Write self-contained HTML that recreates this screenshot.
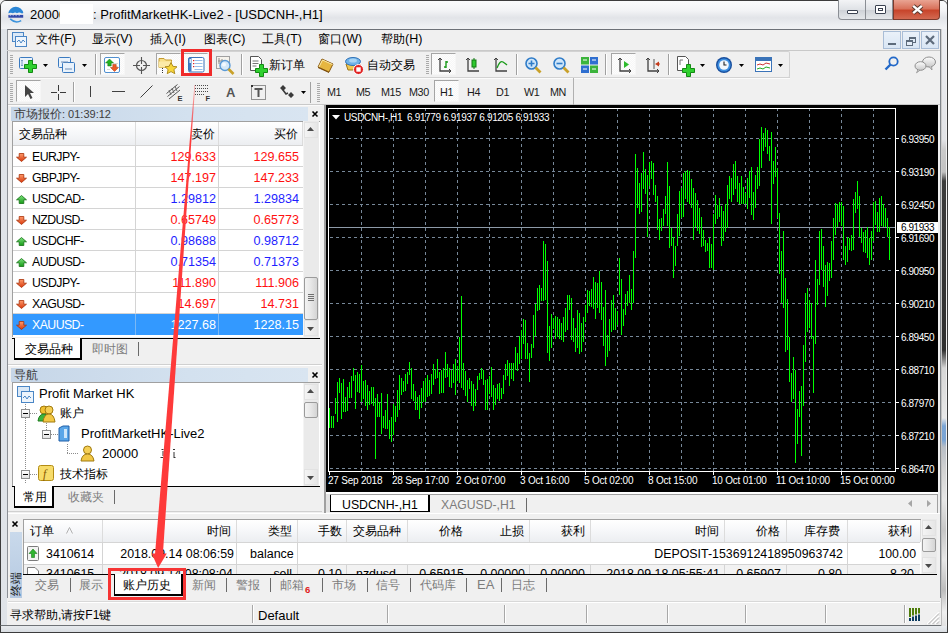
<!DOCTYPE html>
<html><head><meta charset="utf-8">
<style>
*{margin:0;padding:0;box-sizing:border-box}
html,body{width:948px;height:633px;overflow:hidden}
body{position:relative;background:#f0f0f0;font-family:"Liberation Sans",sans-serif;font-size:12px;color:#000}
.a{position:absolute}
.t{position:absolute;white-space:pre;line-height:1}
svg{overflow:visible}
</style></head><body>

<div class="a" style="left:0px;top:0px;width:948px;height:633px;background:linear-gradient(90deg,#dfe3e8,#eef0f3 50%,#dfe3e8);border:1px solid #3c3c3c;border-radius:6px 6px 0 0"></div>
<div class="a" style="left:1px;top:1px;width:946px;height:28px;background:linear-gradient(#fafbfc,#f2f3f5 35%,#e2e4e8 60%,#eceef1 85%,#f1f2f4);border-radius:5px 5px 0 0"></div>
<div class="a" style="left:838px;top:0px;width:28px;height:20px;background:linear-gradient(#f3f4f6,#dfe2e6 50%,#cdd1d6 51%,#e4e7ea);border:1px solid #8a8e94;border-top:none;border-radius:0 0 0 4px"></div>
<div class="a" style="left:866px;top:0px;width:27px;height:20px;background:linear-gradient(#f3f4f6,#dfe2e6 50%,#cdd1d6 51%,#e4e7ea);border:1px solid #8a8e94;border-top:none;border-left:none"></div>
<div class="a" style="left:893px;top:0px;width:47px;height:20px;background:linear-gradient(#e9a493,#d9735c 45%,#c8452b 55%,#d36a52);border:1px solid #7c3a2c;border-top:none;border-radius:0 0 4px 0"></div>
<div class="a" style="left:847px;top:10px;width:11px;height:4px;border:1.5px solid #3a4250;background:#fff;border-radius:1px"></div>
<div class="a" style="left:875px;top:5px;width:11px;height:9px;border:1.5px solid #3a4250;background:#fff;border-radius:1px"></div>
<div class="a" style="left:878px;top:8px;width:5px;height:3px;border:1px solid #3a4250"></div>
<svg class="a" style="left:911px;top:4px;" width="13" height="11" viewBox="0 0 13 11"><path d="M2.2 1.8 L10.8 9.2 M10.8 1.8 L2.2 9.2" stroke="#5a3a30" stroke-width="4.4"/><path d="M2.2 1.8 L10.8 9.2 M10.8 1.8 L2.2 9.2" stroke="#fff" stroke-width="2.4"/></svg>
<svg class="a" style="left:7px;top:6px;" width="18" height="18" viewBox="0 0 18 18"><path d="M1.3 7.3 A7.6 7.6 0 0 1 16.3 7 L15 7.4 Q12 5.6 10 7.2 Q8 5.8 6 7.3 Q4 6.2 1.3 7.3Z" fill="#2a86d6"/><rect x="1.4" y="8.9" width="14.8" height="2.8" fill="#3047a8"/><path d="M2.6 9.6h1.6M5.6 9.6h1.2M8.5 9.6h1.3M11.6 9.6h1.2" stroke="#c8d4f0" stroke-width="0.7"/><path d="M3.2 12.9 Q8.5 18 14.2 14.6" stroke="#3a92dc" stroke-width="1.5" fill="none"/></svg>
<div class="t" style="left:30px;top:8px;font-size:13px;color:#000;">20000</div>
<div class="a" style="left:60px;top:4px;width:33px;height:20px;background:#fff"></div>
<div class="t" style="left:93px;top:8px;font-size:13px;color:#000;">: ProfitMarketHK-Live2 - [USDCNH-,H1]</div>
<div class="a" style="left:7px;top:29px;width:934px;height:597px;background:#f0f0f0;border-top:1px solid #6d7178;border-left:1px solid #8c9096;border-right:1px solid #80858b"></div>
<svg class="a" style="left:12px;top:32px;" width="15" height="15" viewBox="0 0 15 15"><rect x="0.5" y="0.5" width="11" height="9" fill="#dbe9f7" stroke="#4a86c5"/><rect x="3.5" y="4.5" width="11" height="10" fill="#eef5fc" stroke="#4a86c5"/><path d="M5 10 l2 -2 l2 3 l2 -3 l2 2" stroke="#4a86c5" fill="none"/></svg>
<div class="t" style="left:36px;top:33px;font-size:12.5px;color:#000;"><span style="font-size:12px">文件</span>(F)</div>
<div class="t" style="left:92px;top:33px;font-size:12.5px;color:#000;"><span style="font-size:12px">显示</span>(V)</div>
<div class="t" style="left:150px;top:33px;font-size:12.5px;color:#000;"><span style="font-size:12px">插入</span>(I)</div>
<div class="t" style="left:204px;top:33px;font-size:12.5px;color:#000;"><span style="font-size:12px">图表</span>(C)</div>
<div class="t" style="left:262px;top:33px;font-size:12.5px;color:#000;"><span style="font-size:12px">工具</span>(T)</div>
<div class="t" style="left:318px;top:33px;font-size:12.5px;color:#000;"><span style="font-size:12px">窗口</span>(W)</div>
<div class="t" style="left:381px;top:33px;font-size:12.5px;color:#000;"><span style="font-size:12px">帮助</span>(H)</div>
<div class="a" style="left:883px;top:31px;width:18px;height:18px;background:linear-gradient(#eaf1f9,#d9e6f4);border:1px solid #a9bdd6"></div>
<div class="a" style="left:902px;top:31px;width:18px;height:18px;background:linear-gradient(#eaf1f9,#d9e6f4);border:1px solid #a9bdd6"></div>
<div class="a" style="left:921px;top:31px;width:18px;height:18px;background:linear-gradient(#eaf1f9,#d9e6f4);border:1px solid #a9bdd6"></div>
<div class="a" style="left:888px;top:43px;width:8px;height:2px;background:#5d6b7b"></div>
<div class="a" style="left:909px;top:37px;width:7px;height:6px;border:1.5px solid #5d6b7b;border-top-width:2px"></div>
<div class="a" style="left:906px;top:40px;width:7px;height:6px;border:1.5px solid #5d6b7b;border-top-width:2px;background:#e4edf7"></div>
<svg class="a" style="left:925px;top:35px;" width="10" height="10" viewBox="0 0 10 10"><path d="M1 1 L9 9 M9 1 L1 9" stroke="#5d6b7b" stroke-width="2.2"/></svg>
<div class="a" style="left:7px;top:50px;width:934px;height:1px;background:#d5d5d5"></div>
<div class="a" style="left:8px;top:50px;width:932px;height:1px;background:#c9c9c9"></div>
<div class="a" style="left:8px;top:77px;width:782px;height:1px;background:#cfcfcf"></div>
<div class="a" style="left:8px;top:78px;width:782px;height:1px;background:#fbfbfb"></div>
<div class="a" style="left:8px;top:104px;width:932px;height:1px;background:#c9c9c9"></div>
<div class="a" style="left:8px;top:105px;width:932px;height:1px;background:#fafafa"></div>
<div class="a" style="left:9px;top:51px;width:781px;height:27px;border:1px solid #d2d2d2;border-radius:2px;border-left:none"></div>
<svg class="a" style="left:10px;top:55px;" width="3" height="19" viewBox="0 0 3 19"><rect x="0" y="0" width="3" height="1" fill="#a9a9a9"/><rect x="0" y="2" width="3" height="1" fill="#a9a9a9"/><rect x="0" y="4" width="3" height="1" fill="#a9a9a9"/><rect x="0" y="6" width="3" height="1" fill="#a9a9a9"/><rect x="0" y="8" width="3" height="1" fill="#a9a9a9"/><rect x="0" y="10" width="3" height="1" fill="#a9a9a9"/><rect x="0" y="12" width="3" height="1" fill="#a9a9a9"/><rect x="0" y="14" width="3" height="1" fill="#a9a9a9"/><rect x="0" y="16" width="3" height="1" fill="#a9a9a9"/><rect x="0" y="18" width="3" height="1" fill="#a9a9a9"/></svg>
<svg class="a" style="left:19px;top:57px;" width="18" height="18" viewBox="0 0 18 18"><rect x="0.5" y="0.5" width="13" height="11" rx="1" fill="#e9f2fb" stroke="#3a7ac0"/><path d="M3 3 v6 M2 4 l1 -1 l1 1 M2 8 l1 1 l1 -1" stroke="#7a9cc4" fill="none"/><path d="M5.5 7.5 h4 v-4 h4 v4 h4 v4 h-4 v4 h-4 v-4 h-4z" fill="#2fd02f" stroke="#138a13"/></svg>
<svg class="a" style="left:43px;top:64px;" width="5" height="3" viewBox="0 0 5 3"><path d="M0 0 H5 L2.5 3Z" fill="#000"/></svg>
<svg class="a" style="left:58px;top:57px;" width="17" height="16" viewBox="0 0 17 16"><rect x="0.5" y="0.5" width="12" height="10" rx="1" fill="#e9f2fb" stroke="#3a7ac0"/><rect x="4.5" y="5.5" width="12" height="10" rx="1" fill="#e9f2fb" stroke="#3a7ac0"/><path d="M3 5 h7 M7 12 h7" stroke="#6f8fb8"/></svg>
<svg class="a" style="left:82px;top:64px;" width="5" height="3" viewBox="0 0 5 3"><path d="M0 0 H5 L2.5 3Z" fill="#000"/></svg>
<div class="a" style="left:95px;top:54px;width:1px;height:21px;background:#a0a0a0"></div>
<div class="a" style="left:96px;top:54px;width:1px;height:21px;background:#fff"></div>
<div class="a" style="left:100px;top:53px;width:25px;height:22px;background:repeating-conic-gradient(#f7f7f7 0 25%,#fdfdfd 0 50%) 0 0/2px 2px;border:1px solid;border-color:#a5a5a5 #f6f6f6 #f6f6f6 #a5a5a5"></div>
<svg class="a" style="left:104px;top:57px;" width="17" height="16" viewBox="0 0 17 16"><rect x="0.5" y="0.5" width="15" height="15" rx="1.5" fill="#fff" stroke="#4f8fd0"/><path d="M9 6.5h5M9 9.5h5M3 12.5h3" stroke="#d8d8d8"/><path d="M5.5 2 l4 4 h-2.3 v3 h-3.4 v-3 h-2.3z" fill="#22b422" stroke="#137013" stroke-width="0.5"/><path d="M10.5 14.5 l4 -4 h-2.3 v-3 h-3.4 v3 h-2.3z" fill="#ee5a24" stroke="#a83008" stroke-width="0.5"/></svg>
<svg class="a" style="left:133px;top:57px;" width="16" height="16" viewBox="0 0 16 16"><circle cx="8.5" cy="8.5" r="5" fill="none" stroke="#555" stroke-width="1.2"/><path d="M8.5 0 v7 M8.5 10 v7 M0 8.5 h7 M10 8.5 h7" stroke="#555" stroke-width="1.1"/></svg>
<div class="a" style="left:156px;top:53px;width:25px;height:22px;background:repeating-conic-gradient(#f7f7f7 0 25%,#fdfdfd 0 50%) 0 0/2px 2px;border:1px solid;border-color:#a5a5a5 #f6f6f6 #f6f6f6 #a5a5a5"></div>
<svg class="a" style="left:158px;top:56px;" width="20" height="19" viewBox="0 0 20 19"><path d="M1 2.5 h5 l1.5 1.5 h6 v7.5 h-12.5z" fill="#f8e08a" stroke="#c49a30"/><path d="M1 5.5 h12.5 v6 h-12.5z" fill="#fbeaa8"/><path d="M13 6.5 l1.9 3.8 l4.1 .5 l-3.1 2.8 l.9 4.1 l-3.8 -2.1 l-3.8 2.1 l.9 -4.1 l-3.1 -2.8 l4.1 -.5z" fill="#f7d63a" stroke="#a88416" stroke-width="0.9"/><path d="M4.5 12 v6" stroke="#333" stroke-dasharray="1 1"/></svg>
<div class="a" style="left:183px;top:53px;width:25px;height:22px;background:repeating-conic-gradient(#f7f7f7 0 25%,#fdfdfd 0 50%) 0 0/2px 2px;border:1px solid;border-color:#a5a5a5 #f6f6f6 #f6f6f6 #a5a5a5"></div>
<svg class="a" style="left:188px;top:57px;" width="17" height="16" viewBox="0 0 17 16"><rect x="0.5" y="0.5" width="15.5" height="14.5" rx="1.5" fill="#fff" stroke="#3a73b8"/><rect x="1" y="1" width="2.5" height="13.5" fill="#3f7cc4"/><rect x="1.5" y="2" width="1.5" height="4" fill="#dfeaf6"/><path d="M6.5 3.5 h8 M6.5 6.5 h8 M6.5 9.5 h8 M6.5 12.5 h8" stroke="#8db8e6" stroke-width="0.9"/><rect x="5" y="3" width="1.2" height="1.2" fill="#e02222"/><rect x="5" y="6" width="1.2" height="1.2" fill="#e02222"/><rect x="5" y="9" width="1.2" height="1.2" fill="#e02222"/></svg>
<div class="a" style="left:181px;top:49px;width:31px;height:27px;border:3px solid #f02b2b"></div>
<svg class="a" style="left:216px;top:56px;" width="19" height="19" viewBox="0 0 19 19"><rect x="0.5" y="0.5" width="13" height="12" fill="#f6f3ec" stroke="#a0a0a0"/><path d="M3 2 v6 M6 3 v4 M2 5 h6" stroke="#8a8a8a"/><circle cx="9" cy="9.5" r="5" fill="#d6e9f8" stroke="#5a9ad6" stroke-width="1.4"/><circle cx="8" cy="8.5" r="2" fill="#f4faff"/><path d="M12.5 13 l5 5" stroke="#c9a12a" stroke-width="2.6"/></svg>
<div class="a" style="left:241px;top:54px;width:1px;height:21px;background:#a0a0a0"></div>
<div class="a" style="left:242px;top:54px;width:1px;height:21px;background:#fff"></div>
<svg class="a" style="left:250px;top:56px;" width="18" height="21" viewBox="0 0 18 21"><path d="M0.5 0.5 h8 l3 3 v11 h-11z" fill="#fff" stroke="#555"/><path d="M2.5 5 h6 M2.5 7.5 h6 M2.5 10 h4" stroke="#777"/><path d="M5.5 12.5 h4 v-4 h4 v4 h4 v4 h-4 v4 h-4 v-4 h-4z" fill="#2fd02f" stroke="#138a13"/></svg>
<div class="t" style="left:269px;top:58px;font-size:13px;color:#000;"><span style="font-size:12px">新订单</span></div>
<svg class="a" style="left:317px;top:57px;" width="17" height="16" viewBox="0 0 17 16"><path d="M1 10 l4 -8 l11 5 l-4 8z" fill="#e6b640" stroke="#8a5a10"/><path d="M2 10 l3.5 -7 l10 4.5" stroke="#fbe9a8" fill="none"/><path d="M1 10 l11 5 v1 l-11 -5z" fill="#7a4a08"/></svg>
<svg class="a" style="left:345px;top:56px;" width="19" height="19" viewBox="0 0 19 19"><path d="M1 8 L15 8 L13 14 L3 14Z" fill="#f0c850" stroke="#a07818"/><ellipse cx="8" cy="5.5" rx="7.5" ry="4" fill="#6fb2e8" stroke="#2f72b8"/><ellipse cx="8" cy="4.5" rx="4" ry="2" fill="#a8d4f4"/><circle cx="13.5" cy="13.5" r="5" fill="#e02222" stroke="#fff" stroke-width="1"/><rect x="11.3" y="11.3" width="4.4" height="4.4" fill="#fff"/></svg>
<div class="t" style="left:367px;top:58px;font-size:13px;color:#000;"><span style="font-size:12px">自动交易</span></div>
<svg class="a" style="left:426px;top:55px;" width="3" height="19" viewBox="0 0 3 19"><rect x="0" y="0" width="3" height="1" fill="#a9a9a9"/><rect x="0" y="2" width="3" height="1" fill="#a9a9a9"/><rect x="0" y="4" width="3" height="1" fill="#a9a9a9"/><rect x="0" y="6" width="3" height="1" fill="#a9a9a9"/><rect x="0" y="8" width="3" height="1" fill="#a9a9a9"/><rect x="0" y="10" width="3" height="1" fill="#a9a9a9"/><rect x="0" y="12" width="3" height="1" fill="#a9a9a9"/><rect x="0" y="14" width="3" height="1" fill="#a9a9a9"/><rect x="0" y="16" width="3" height="1" fill="#a9a9a9"/><rect x="0" y="18" width="3" height="1" fill="#a9a9a9"/></svg>
<div class="a" style="left:431px;top:53px;width:25px;height:22px;background:repeating-conic-gradient(#f7f7f7 0 25%,#fdfdfd 0 50%) 0 0/2px 2px;border:1px solid;border-color:#a5a5a5 #f6f6f6 #f6f6f6 #a5a5a5"></div>
<svg class="a" style="left:437px;top:57px;" width="15" height="16" viewBox="0 0 15 16"><path d="M3 1 v13 h11" stroke="#404040" fill="none" stroke-width="1.3"/><path d="M1 3 l2 -2 l2 2 M12 12 l2 2 l-2 2" stroke="#404040" fill="none"/><path d="M9 4 v7 M7 10 h2 M9 5 h2" stroke="#1a9b1a" stroke-width="1.4" fill="none"/></svg>
<svg class="a" style="left:465px;top:57px;" width="15" height="16" viewBox="0 0 15 16"><path d="M3 1 v13 h11" stroke="#404040" fill="none" stroke-width="1.3"/><path d="M1 3 l2 -2 l2 2" stroke="#404040" fill="none"/><rect x="7" y="3" width="4" height="7" fill="#2dc82d" stroke="#137a13"/><path d="M9 1 v2 M9 10 v2" stroke="#137a13"/></svg>
<svg class="a" style="left:493px;top:57px;" width="15" height="16" viewBox="0 0 15 16"><path d="M3 1 v13 h11" stroke="#404040" fill="none" stroke-width="1.3"/><path d="M1 3 l2 -2 l2 2" stroke="#404040" fill="none"/><path d="M4 11 q3 -8 6 -6 t4 3" stroke="#1a9b1a" fill="none" stroke-width="1.3"/></svg>
<div class="a" style="left:516px;top:54px;width:1px;height:21px;background:#a0a0a0"></div>
<div class="a" style="left:517px;top:54px;width:1px;height:21px;background:#fff"></div>
<svg class="a" style="left:525px;top:57px;" width="17" height="17" viewBox="0 0 17 17"><circle cx="6.5" cy="6.5" r="5.5" fill="#cfe6fa" stroke="#2f7cc8" stroke-width="1.6"/><path d="M3.5 6.5 h6 M6.5 3.5 v6" stroke="#2f7cc8" stroke-width="1.6"/><path d="M10.5 10.5 l5 5" stroke="#c9a12a" stroke-width="2.8"/></svg>
<svg class="a" style="left:553px;top:57px;" width="17" height="17" viewBox="0 0 17 17"><circle cx="6.5" cy="6.5" r="5.5" fill="#cfe6fa" stroke="#2f7cc8" stroke-width="1.6"/><path d="M3.5 6.5 h6" stroke="#2f7cc8" stroke-width="1.6"/><path d="M10.5 10.5 l5 5" stroke="#c9a12a" stroke-width="2.8"/></svg>
<svg class="a" style="left:581px;top:57px;" width="17" height="16" viewBox="0 0 17 16"><rect x="0" y="0" width="8" height="7.5" fill="#3cb43c"/><rect x="9" y="0" width="8" height="7.5" fill="#2f6fd0"/><rect x="0" y="8.5" width="8" height="7.5" fill="#2f6fd0"/><rect x="9" y="8.5" width="8" height="7.5" fill="#3cb43c"/><path d="M2 3 h4 M11 3 h4 M2 12 h4 M11 12 h4" stroke="#fff"/></svg>
<div class="a" style="left:605px;top:54px;width:1px;height:21px;background:#a0a0a0"></div>
<div class="a" style="left:606px;top:54px;width:1px;height:21px;background:#fff"></div>
<div class="a" style="left:611px;top:53px;width:25px;height:22px;background:repeating-conic-gradient(#f7f7f7 0 25%,#fdfdfd 0 50%) 0 0/2px 2px;border:1px solid;border-color:#a5a5a5 #f6f6f6 #f6f6f6 #a5a5a5"></div>
<svg class="a" style="left:617px;top:57px;" width="15" height="16" viewBox="0 0 15 16"><path d="M3 1 v13 h11" stroke="#404040" fill="none" stroke-width="1.3"/><path d="M1 3 l2 -2 l2 2 M12 12 l2 2 l-2 2" stroke="#404040" fill="none"/><path d="M7 4 l5 3.5 l-5 3.5z" fill="#2dbb2d"/></svg>
<svg class="a" style="left:645px;top:57px;" width="15" height="16" viewBox="0 0 15 16"><path d="M3 1 v13 h11" stroke="#404040" fill="none" stroke-width="1.3"/><path d="M1 3 l2 -2 l2 2 M12 12 l2 2 l-2 2" stroke="#404040" fill="none"/><path d="M9 2 v10" stroke="#555"/><path d="M10 7 l4 -2.5 v5z" fill="#c43a1a"/><path d="M13 7 h2" stroke="#c43a1a"/></svg>
<div class="a" style="left:668px;top:54px;width:1px;height:21px;background:#a0a0a0"></div>
<div class="a" style="left:669px;top:54px;width:1px;height:21px;background:#fff"></div>
<svg class="a" style="left:677px;top:56px;" width="18" height="21" viewBox="0 0 18 21"><path d="M0.5 0.5 h8 l3 3 v11 h-11z" fill="#fff" stroke="#555"/><path d="M3 9 v-5 h3" stroke="#777" fill="none"/><path d="M5.5 12.5 h4 v-4 h4 v4 h4 v4 h-4 v4 h-4 v-4 h-4z" fill="#2fd02f" stroke="#138a13"/></svg>
<svg class="a" style="left:700px;top:64px;" width="5" height="3" viewBox="0 0 5 3"><path d="M0 0 H5 L2.5 3Z" fill="#000"/></svg>
<svg class="a" style="left:716px;top:57px;" width="17" height="17" viewBox="0 0 17 17"><circle cx="8" cy="8" r="8" fill="#184f9e"/><circle cx="8" cy="8" r="6.6" fill="#3c8ee0"/><circle cx="8" cy="8" r="4.8" fill="#f4f8fc"/><path d="M8 4.5 v3.5 h2.5" stroke="#222" fill="none" stroke-width="1.1"/></svg>
<svg class="a" style="left:739px;top:64px;" width="5" height="3" viewBox="0 0 5 3"><path d="M0 0 H5 L2.5 3Z" fill="#000"/></svg>
<svg class="a" style="left:755px;top:57px;" width="17" height="16" viewBox="0 0 17 16"><rect x="0.5" y="0.5" width="16" height="14" fill="#fff" stroke="#3a73b8"/><rect x="1" y="1" width="15" height="3" fill="#3a73b8"/><path d="M2 8 l3 -1 l3 1 l3 -2 l4 1" stroke="#cc3333" fill="none"/><path d="M2 12 l3 -1 l3 1 l3 -2 l4 1" stroke="#22aa22" fill="none"/></svg>
<svg class="a" style="left:778px;top:64px;" width="5" height="3" viewBox="0 0 5 3"><path d="M0 0 H5 L2.5 3Z" fill="#000"/></svg>
<svg class="a" style="left:884px;top:56px;" width="16" height="16" viewBox="0 0 16 16"><circle cx="9.5" cy="5.5" r="4.2" fill="none" stroke="#2268c8" stroke-width="1.8"/><path d="M6.5 8.5 l-5 5" stroke="#2268c8" stroke-width="2.4"/></svg>
<svg class="a" style="left:914px;top:56px;" width="24" height="17" viewBox="0 0 24 17"><defs><linearGradient id="bub" x1="0" y1="0" x2="0" y2="1"><stop offset="0" stop-color="#fdfdfd"/><stop offset="1" stop-color="#c9c9c9"/></linearGradient></defs><ellipse cx="15" cy="6" rx="6.5" ry="5" fill="url(#bub)" stroke="#8f8f8f"/><path d="M15 10.5 l3 3.5 l-0.5 -4" fill="#d0d0d0" stroke="#8f8f8f" stroke-width="0.8"/><ellipse cx="6.5" cy="10" rx="5.5" ry="4.3" fill="url(#bub)" stroke="#8f8f8f"/><path d="M4 13.8 l-1.5 3 l3.5 -2.6" fill="#d0d0d0" stroke="#8f8f8f" stroke-width="0.8"/></svg>
<div class="a" style="left:9px;top:78px;width:565px;height:27px;border-right:1px solid #b0b0b0"></div>
<svg class="a" style="left:10px;top:83px;" width="3" height="19" viewBox="0 0 3 19"><rect x="0" y="0" width="3" height="1" fill="#a9a9a9"/><rect x="0" y="2" width="3" height="1" fill="#a9a9a9"/><rect x="0" y="4" width="3" height="1" fill="#a9a9a9"/><rect x="0" y="6" width="3" height="1" fill="#a9a9a9"/><rect x="0" y="8" width="3" height="1" fill="#a9a9a9"/><rect x="0" y="10" width="3" height="1" fill="#a9a9a9"/><rect x="0" y="12" width="3" height="1" fill="#a9a9a9"/><rect x="0" y="14" width="3" height="1" fill="#a9a9a9"/><rect x="0" y="16" width="3" height="1" fill="#a9a9a9"/><rect x="0" y="18" width="3" height="1" fill="#a9a9a9"/></svg>
<div class="a" style="left:16px;top:80px;width:25px;height:22px;background:repeating-conic-gradient(#f7f7f7 0 25%,#fdfdfd 0 50%) 0 0/2px 2px;border:1px solid;border-color:#a5a5a5 #f6f6f6 #f6f6f6 #a5a5a5"></div>
<svg class="a" style="left:24px;top:85px;" width="10" height="15" viewBox="0 0 10 15"><path d="M1 0 v12 l3 -3 l2.5 5 l2 -1 l-2.5 -5 h4z" fill="#444"/></svg>
<svg class="a" style="left:50px;top:84px;" width="16" height="16" viewBox="0 0 16 16"><path d="M8.5 1 v6 M8.5 10 v6 M1 8.5 h6 M10 8.5 h6" stroke="#3a3a3a" stroke-width="1"/></svg>
<div class="a" style="left:73px;top:82px;width:1px;height:20px;background:#a0a0a0"></div>
<div class="a" style="left:74px;top:82px;width:1px;height:20px;background:#fff"></div>
<div class="a" style="left:90px;top:86px;width:1px;height:11px;background:#404040"></div>
<div class="a" style="left:112px;top:91px;width:13px;height:1px;background:#404040"></div>
<svg class="a" style="left:140px;top:85px;" width="13" height="13" viewBox="0 0 13 13"><path d="M0.5 12.5 L12.5 0.5" stroke="#404040"/></svg>
<svg class="a" style="left:166px;top:84px;" width="18" height="17" viewBox="0 0 18 17"><path d="M0.5 9.5 l11 -9 M1.5 12.5 l12 -10 M3 15 l11 -9" stroke="#555" stroke-width="1"/><path d="M3 6 l2 5 M6 4 l2 5 M9 2 l2 5" stroke="#666"/><text x="11.5" y="16.5" font-size="7.5" font-family="Liberation Sans" font-weight="bold" fill="#333">E</text></svg>
<svg class="a" style="left:195px;top:84px;" width="17" height="17" viewBox="0 0 17 17"><path d="M0 1.5 h14 M0 4.5 h14 M0 7.5 h14 M0 10.5 h9" stroke="#4a4a4a" stroke-dasharray="1 1"/><text x="10.5" y="16.5" font-size="7.5" font-family="Liberation Sans" font-weight="bold" fill="#333">F</text></svg>
<div class="t" style="left:226px;top:86px;font-size:13px;color:#555;font-weight:bold">A</div>
<svg class="a" style="left:251px;top:85px;" width="15" height="15" viewBox="0 0 15 15"><rect x="0.5" y="0.5" width="14" height="14" fill="none" stroke="#333" stroke-dasharray="1 1"/><rect x="0" y="0" width="2" height="2" fill="#333"/><path d="M3.5 4 h8 M7.5 4 v8" stroke="#555" stroke-width="2"/></svg>
<svg class="a" style="left:279px;top:84px;" width="16" height="16" viewBox="0 0 16 16"><path d="M1 4 l3 -3 l3 3 l-3 3z M9 11 l3 -3 l3 3 l-3 3z" fill="#3a3a3a"/><path d="M4 6 l3 4 l2 -1" stroke="#3a3a3a" stroke-width="1.6" fill="none"/></svg>
<svg class="a" style="left:301px;top:91px;" width="5" height="3" viewBox="0 0 5 3"><path d="M0 0 H5 L2.5 3Z" fill="#000"/></svg>
<div class="a" style="left:310px;top:82px;width:1px;height:21px;background:#a0a0a0"></div>
<svg class="a" style="left:317px;top:83px;" width="3" height="19" viewBox="0 0 3 19"><rect x="0" y="0" width="3" height="1" fill="#a9a9a9"/><rect x="0" y="2" width="3" height="1" fill="#a9a9a9"/><rect x="0" y="4" width="3" height="1" fill="#a9a9a9"/><rect x="0" y="6" width="3" height="1" fill="#a9a9a9"/><rect x="0" y="8" width="3" height="1" fill="#a9a9a9"/><rect x="0" y="10" width="3" height="1" fill="#a9a9a9"/><rect x="0" y="12" width="3" height="1" fill="#a9a9a9"/><rect x="0" y="14" width="3" height="1" fill="#a9a9a9"/><rect x="0" y="16" width="3" height="1" fill="#a9a9a9"/><rect x="0" y="18" width="3" height="1" fill="#a9a9a9"/></svg>
<div class="t" style="left:327px;top:87px;font-size:10.8px;color:#1a1a1a;letter-spacing:-0.4px">M1</div>
<div class="t" style="left:356px;top:87px;font-size:10.8px;color:#1a1a1a;letter-spacing:-0.4px">M5</div>
<div class="t" style="left:381px;top:87px;font-size:10.8px;color:#1a1a1a;letter-spacing:-0.4px">M15</div>
<div class="t" style="left:409px;top:87px;font-size:10.8px;color:#1a1a1a;letter-spacing:-0.4px">M30</div>
<div class="t" style="left:467px;top:87px;font-size:10.8px;color:#1a1a1a;letter-spacing:-0.4px">H4</div>
<div class="t" style="left:496px;top:87px;font-size:10.8px;color:#1a1a1a;letter-spacing:-0.4px">D1</div>
<div class="t" style="left:524px;top:87px;font-size:10.8px;color:#1a1a1a;letter-spacing:-0.4px">W1</div>
<div class="t" style="left:550px;top:87px;font-size:10.8px;color:#1a1a1a;letter-spacing:-0.4px">MN</div>
<div class="a" style="left:434px;top:80px;width:25px;height:22px;background:repeating-conic-gradient(#f7f7f7 0 25%,#fdfdfd 0 50%) 0 0/2px 2px;border:1px solid;border-color:#a5a5a5 #f6f6f6 #f6f6f6 #a5a5a5"></div>
<div class="t" style="left:440px;top:87px;font-size:10.8px;color:#1a1a1a;letter-spacing:-0.4px">H1</div>
<div class="a" style="left:322px;top:105px;width:2px;height:409px;background:#f0f0f0"></div>
<div class="a" style="left:324px;top:105px;width:1px;height:409px;background:#a0a0a0"></div>
<div class="a" style="left:325px;top:105px;width:1px;height:409px;background:#fff"></div>
<div class="a" style="left:11px;top:107px;width:297px;height:14px;background:linear-gradient(90deg,#c6d6e8,#d3e1ef 60%,#d9e5f1);"></div>
<div class="t" style="left:14px;top:108px;font-size:11px;color:#3c3c3c;"><span style="font-size:12px">市场报价</span>: 01:39:12</div>
<svg class="a" style="left:312px;top:111px;" width="6" height="6" viewBox="0 0 6 6"><path d="M0.5 0.5 L5.5 5.5 M5.5 0.5 L0.5 5.5" stroke="#000" stroke-width="1.6"/></svg>
<div class="a" style="left:12px;top:121px;width:308px;height:216px;background:#fff;border-top:1px solid #a0a0a0;border-left:1px solid #a0a0a0"></div>
<div class="a" style="left:13px;top:122px;width:290px;height:23px;background:linear-gradient(#ffffff,#f6f7f9 50%,#eceef1)"></div>
<div class="a" style="left:13px;top:145px;width:290px;height:1px;background:#d5d5d5"></div>
<div class="a" style="left:135px;top:122px;width:1px;height:23px;background:#dcdcdc"></div>
<div class="a" style="left:218px;top:122px;width:1px;height:23px;background:#dcdcdc"></div>
<div class="a" style="left:302px;top:122px;width:1px;height:23px;background:#dcdcdc"></div>
<div class="t" style="left:19px;top:127px;font-size:13px;color:#000;"><span style="font-size:12px">交易品种</span></div>
<div class="t" style="left:-185px;width:400px;text-align:right;top:127px;font-size:13px;color:#000;"><span style="font-size:12px">卖价</span></div>
<div class="t" style="left:-102px;width:400px;text-align:right;top:127px;font-size:13px;color:#000;"><span style="font-size:12px">买价</span></div>
<div class="a" style="left:13px;top:166px;width:290px;height:1px;background:#d4d4d4"></div>
<div class="a" style="left:135px;top:146px;width:1px;height:20px;background:#d4d4d4"></div>
<div class="a" style="left:218px;top:146px;width:1px;height:20px;background:#d4d4d4"></div>
<svg class="a" style="left:16px;top:153px;" width="11" height="9" viewBox="0 0 11 9"><defs><linearGradient id="gd" x1="0" y1="0" x2="0" y2="1"><stop offset="0" stop-color="#ff9a6a"/><stop offset="1" stop-color="#d8380c"/></linearGradient></defs><path d="M5.5 8.5 L10.5 4.2 H7.8 V0.5 H3.2 V4.2 H0.5Z" fill="url(#gd)" stroke="#a83008" stroke-width="0.8"/></svg>
<div class="t" style="left:32px;top:151px;font-size:12.3px;color:#000;letter-spacing:-0.55px">EURJPY-</div>
<div class="t" style="left:-184px;width:400px;text-align:right;top:151px;font-size:12.6px;color:#ff1010;">129.633</div>
<div class="t" style="left:-101px;width:400px;text-align:right;top:151px;font-size:12.6px;color:#ff1010;">129.655</div>
<div class="a" style="left:13px;top:187px;width:290px;height:1px;background:#d4d4d4"></div>
<div class="a" style="left:135px;top:167px;width:1px;height:20px;background:#d4d4d4"></div>
<div class="a" style="left:218px;top:167px;width:1px;height:20px;background:#d4d4d4"></div>
<svg class="a" style="left:16px;top:174px;" width="11" height="9" viewBox="0 0 11 9"><defs><linearGradient id="gd" x1="0" y1="0" x2="0" y2="1"><stop offset="0" stop-color="#ff9a6a"/><stop offset="1" stop-color="#d8380c"/></linearGradient></defs><path d="M5.5 8.5 L10.5 4.2 H7.8 V0.5 H3.2 V4.2 H0.5Z" fill="url(#gd)" stroke="#a83008" stroke-width="0.8"/></svg>
<div class="t" style="left:32px;top:172px;font-size:12.3px;color:#000;letter-spacing:-0.55px">GBPJPY-</div>
<div class="t" style="left:-184px;width:400px;text-align:right;top:172px;font-size:12.6px;color:#ff1010;">147.197</div>
<div class="t" style="left:-101px;width:400px;text-align:right;top:172px;font-size:12.6px;color:#ff1010;">147.233</div>
<div class="a" style="left:13px;top:208px;width:290px;height:1px;background:#d4d4d4"></div>
<div class="a" style="left:135px;top:188px;width:1px;height:20px;background:#d4d4d4"></div>
<div class="a" style="left:218px;top:188px;width:1px;height:20px;background:#d4d4d4"></div>
<svg class="a" style="left:16px;top:195px;" width="11" height="9" viewBox="0 0 11 9"><defs><linearGradient id="gu" x1="0" y1="0" x2="0" y2="1"><stop offset="0" stop-color="#7be07b"/><stop offset="1" stop-color="#169a16"/></linearGradient></defs><path d="M5.5 0.5 L10.5 4.8 H7.8 V8.5 H3.2 V4.8 H0.5Z" fill="url(#gu)" stroke="#137013" stroke-width="0.8"/></svg>
<div class="t" style="left:32px;top:193px;font-size:12.3px;color:#000;letter-spacing:-0.55px">USDCAD-</div>
<div class="t" style="left:-184px;width:400px;text-align:right;top:193px;font-size:12.6px;color:#1f1fff;">1.29812</div>
<div class="t" style="left:-101px;width:400px;text-align:right;top:193px;font-size:12.6px;color:#1f1fff;">1.29834</div>
<div class="a" style="left:13px;top:229px;width:290px;height:1px;background:#d4d4d4"></div>
<div class="a" style="left:135px;top:209px;width:1px;height:20px;background:#d4d4d4"></div>
<div class="a" style="left:218px;top:209px;width:1px;height:20px;background:#d4d4d4"></div>
<svg class="a" style="left:16px;top:216px;" width="11" height="9" viewBox="0 0 11 9"><defs><linearGradient id="gd" x1="0" y1="0" x2="0" y2="1"><stop offset="0" stop-color="#ff9a6a"/><stop offset="1" stop-color="#d8380c"/></linearGradient></defs><path d="M5.5 8.5 L10.5 4.2 H7.8 V0.5 H3.2 V4.2 H0.5Z" fill="url(#gd)" stroke="#a83008" stroke-width="0.8"/></svg>
<div class="t" style="left:32px;top:214px;font-size:12.3px;color:#000;letter-spacing:-0.55px">NZDUSD-</div>
<div class="t" style="left:-184px;width:400px;text-align:right;top:214px;font-size:12.6px;color:#ff1010;">0.65749</div>
<div class="t" style="left:-101px;width:400px;text-align:right;top:214px;font-size:12.6px;color:#ff1010;">0.65773</div>
<div class="a" style="left:13px;top:250px;width:290px;height:1px;background:#d4d4d4"></div>
<div class="a" style="left:135px;top:230px;width:1px;height:20px;background:#d4d4d4"></div>
<div class="a" style="left:218px;top:230px;width:1px;height:20px;background:#d4d4d4"></div>
<svg class="a" style="left:16px;top:237px;" width="11" height="9" viewBox="0 0 11 9"><defs><linearGradient id="gu" x1="0" y1="0" x2="0" y2="1"><stop offset="0" stop-color="#7be07b"/><stop offset="1" stop-color="#169a16"/></linearGradient></defs><path d="M5.5 0.5 L10.5 4.8 H7.8 V8.5 H3.2 V4.8 H0.5Z" fill="url(#gu)" stroke="#137013" stroke-width="0.8"/></svg>
<div class="t" style="left:32px;top:235px;font-size:12.3px;color:#000;letter-spacing:-0.55px">USDCHF-</div>
<div class="t" style="left:-184px;width:400px;text-align:right;top:235px;font-size:12.6px;color:#1f1fff;">0.98688</div>
<div class="t" style="left:-101px;width:400px;text-align:right;top:235px;font-size:12.6px;color:#1f1fff;">0.98712</div>
<div class="a" style="left:13px;top:271px;width:290px;height:1px;background:#d4d4d4"></div>
<div class="a" style="left:135px;top:251px;width:1px;height:20px;background:#d4d4d4"></div>
<div class="a" style="left:218px;top:251px;width:1px;height:20px;background:#d4d4d4"></div>
<svg class="a" style="left:16px;top:258px;" width="11" height="9" viewBox="0 0 11 9"><defs><linearGradient id="gu" x1="0" y1="0" x2="0" y2="1"><stop offset="0" stop-color="#7be07b"/><stop offset="1" stop-color="#169a16"/></linearGradient></defs><path d="M5.5 0.5 L10.5 4.8 H7.8 V8.5 H3.2 V4.8 H0.5Z" fill="url(#gu)" stroke="#137013" stroke-width="0.8"/></svg>
<div class="t" style="left:32px;top:256px;font-size:12.3px;color:#000;letter-spacing:-0.55px">AUDUSD-</div>
<div class="t" style="left:-184px;width:400px;text-align:right;top:256px;font-size:12.6px;color:#1f1fff;">0.71354</div>
<div class="t" style="left:-101px;width:400px;text-align:right;top:256px;font-size:12.6px;color:#1f1fff;">0.71373</div>
<div class="a" style="left:13px;top:292px;width:290px;height:1px;background:#d4d4d4"></div>
<div class="a" style="left:135px;top:272px;width:1px;height:20px;background:#d4d4d4"></div>
<div class="a" style="left:218px;top:272px;width:1px;height:20px;background:#d4d4d4"></div>
<svg class="a" style="left:16px;top:279px;" width="11" height="9" viewBox="0 0 11 9"><defs><linearGradient id="gd" x1="0" y1="0" x2="0" y2="1"><stop offset="0" stop-color="#ff9a6a"/><stop offset="1" stop-color="#d8380c"/></linearGradient></defs><path d="M5.5 8.5 L10.5 4.2 H7.8 V0.5 H3.2 V4.2 H0.5Z" fill="url(#gd)" stroke="#a83008" stroke-width="0.8"/></svg>
<div class="t" style="left:32px;top:277px;font-size:12.3px;color:#000;letter-spacing:-0.55px">USDJPY-</div>
<div class="t" style="left:-184px;width:400px;text-align:right;top:277px;font-size:12.6px;color:#ff1010;">111.890</div>
<div class="t" style="left:-101px;width:400px;text-align:right;top:277px;font-size:12.6px;color:#ff1010;">111.906</div>
<div class="a" style="left:13px;top:313px;width:290px;height:1px;background:#d4d4d4"></div>
<div class="a" style="left:135px;top:293px;width:1px;height:20px;background:#d4d4d4"></div>
<div class="a" style="left:218px;top:293px;width:1px;height:20px;background:#d4d4d4"></div>
<svg class="a" style="left:16px;top:300px;" width="11" height="9" viewBox="0 0 11 9"><defs><linearGradient id="gd" x1="0" y1="0" x2="0" y2="1"><stop offset="0" stop-color="#ff9a6a"/><stop offset="1" stop-color="#d8380c"/></linearGradient></defs><path d="M5.5 8.5 L10.5 4.2 H7.8 V0.5 H3.2 V4.2 H0.5Z" fill="url(#gd)" stroke="#a83008" stroke-width="0.8"/></svg>
<div class="t" style="left:32px;top:298px;font-size:12.3px;color:#000;letter-spacing:-0.55px">XAGUSD-</div>
<div class="t" style="left:-184px;width:400px;text-align:right;top:298px;font-size:12.6px;color:#ff1010;">14.697</div>
<div class="t" style="left:-101px;width:400px;text-align:right;top:298px;font-size:12.6px;color:#ff1010;">14.731</div>
<div class="a" style="left:13px;top:314px;width:290px;height:21px;background:#3399ff"></div>
<div class="a" style="left:135px;top:314px;width:1px;height:21px;background:#7ab8f5"></div>
<div class="a" style="left:218px;top:314px;width:1px;height:21px;background:#7ab8f5"></div>
<svg class="a" style="left:16px;top:321px;" width="11" height="9" viewBox="0 0 11 9"><defs><linearGradient id="gd" x1="0" y1="0" x2="0" y2="1"><stop offset="0" stop-color="#ff9a6a"/><stop offset="1" stop-color="#d8380c"/></linearGradient></defs><path d="M5.5 8.5 L10.5 4.2 H7.8 V0.5 H3.2 V4.2 H0.5Z" fill="url(#gd)" stroke="#a83008" stroke-width="0.8"/></svg>
<div class="t" style="left:32px;top:319px;font-size:12.3px;color:#fff;letter-spacing:-0.55px">XAUUSD-</div>
<div class="t" style="left:-184px;width:400px;text-align:right;top:319px;font-size:12.6px;color:#fff;">1227.68</div>
<div class="t" style="left:-101px;width:400px;text-align:right;top:319px;font-size:12.6px;color:#fff;">1228.15</div>
<div class="a" style="left:303px;top:121px;width:16px;height:216px;background:#eaeaea;border-left:1px solid #f4f4f4"></div>
<div class="a" style="left:304px;top:122px;width:14px;height:16px;background:linear-gradient(90deg,#f4f4f4,#e6e6e6);border:1px solid #e2e2e2"></div>
<svg class="a" style="left:307px;top:127px;" width="7" height="4" viewBox="0 0 7 4"><path d="M0 4 L3.5 0 L7 4Z" fill="#4a4a4a"/></svg>
<div class="a" style="left:304px;top:320px;width:14px;height:16px;background:linear-gradient(90deg,#f4f4f4,#e6e6e6);border:1px solid #e2e2e2"></div>
<svg class="a" style="left:307px;top:327px;" width="7" height="4" viewBox="0 0 7 4"><path d="M0 0 L3.5 4 L7 0Z" fill="#4a4a4a"/></svg>
<div class="a" style="left:304px;top:277px;width:14px;height:43px;background:linear-gradient(90deg,#f3f3f3,#e8e8e8 45%,#d4d4d4);border:1px solid #9b9b9b;border-radius:2px"></div>
<div class="a" style="left:308px;top:294px;width:6px;height:1px;background:#6f6f6f"></div>
<div class="a" style="left:308px;top:296px;width:6px;height:1px;background:#6f6f6f"></div>
<div class="a" style="left:308px;top:298px;width:6px;height:1px;background:#6f6f6f"></div>
<div class="a" style="left:308px;top:300px;width:6px;height:1px;background:#6f6f6f"></div>
<div class="a" style="left:12px;top:338px;width:308px;height:1px;background:#000"></div>
<div class="a" style="left:14px;top:338px;width:68px;height:22px;background:#fff;border:1px solid #000;border-top:none;border-right-width:2px;border-bottom-width:2px"></div>
<div class="t" style="left:25px;top:342px;font-size:13px;color:#000;"><span style="font-size:12px">交易品种</span></div>
<div class="t" style="left:92px;top:342px;font-size:13px;color:#7c7c7c;"><span style="font-size:12px">即时图</span></div>
<div class="a" style="left:138px;top:342px;width:1px;height:14px;background:#6a6a6a"></div>
<div class="a" style="left:8px;top:364px;width:314px;height:1px;background:#d0d0d0"></div>
<div class="a" style="left:8px;top:365px;width:314px;height:1px;background:#fff"></div>
<div class="a" style="left:11px;top:368px;width:297px;height:14px;background:linear-gradient(90deg,#c6d6e8,#d3e1ef 60%,#d9e5f1);"></div>
<div class="t" style="left:14px;top:369px;font-size:11px;color:#3c3c3c;"><span style="font-size:12px">导航</span></div>
<svg class="a" style="left:312px;top:372px;" width="6" height="6" viewBox="0 0 6 6"><path d="M0.5 0.5 L5.5 5.5 M5.5 0.5 L0.5 5.5" stroke="#000" stroke-width="1.6"/></svg>
<div class="a" style="left:12px;top:382px;width:308px;height:104px;background:#fff;border-top:1px solid #a0a0a0;border-left:1px solid #a0a0a0"></div>
<div class="a" style="left:303px;top:383px;width:16px;height:103px;background:#eaeaea;border-left:1px solid #f4f4f4"></div>
<div class="a" style="left:304px;top:384px;width:14px;height:16px;background:linear-gradient(90deg,#f4f4f4,#e6e6e6);border:1px solid #e2e2e2"></div>
<svg class="a" style="left:307px;top:389px;" width="7" height="4" viewBox="0 0 7 4"><path d="M0 4 L3.5 0 L7 4Z" fill="#4a4a4a"/></svg>
<div class="a" style="left:304px;top:469px;width:14px;height:16px;background:linear-gradient(90deg,#f4f4f4,#e6e6e6);border:1px solid #e2e2e2"></div>
<svg class="a" style="left:307px;top:476px;" width="7" height="4" viewBox="0 0 7 4"><path d="M0 0 L3.5 4 L7 0Z" fill="#4a4a4a"/></svg>
<div class="a" style="left:304px;top:402px;width:14px;height:16px;background:linear-gradient(90deg,#f3f3f3,#e8e8e8 45%,#d4d4d4);border:1px solid #9b9b9b;border-radius:2px"></div>
<svg class="a" style="left:17px;top:386px;" width="18" height="17" viewBox="0 0 18 17"><rect x="0.5" y="0.5" width="12" height="10" fill="#dbe9f7" stroke="#4a86c5"/><rect x="4.5" y="5.5" width="12" height="11" fill="#eef5fc" stroke="#4a86c5"/><path d="M6 12 l2 -2 l2 3 l2 -3 l2 2" stroke="#4a86c5" fill="none"/></svg>
<div class="t" style="left:39px;top:387px;font-size:13px;color:#000;">Profit Market HK</div>
<div class="a" style="left:25px;top:404px;width:1px;height:80px;background:repeating-linear-gradient(#8c8c8c 0 1px,transparent 1px 2px)"></div>
<div class="a" style="left:30px;top:413px;width:7px;height:1px;background:repeating-linear-gradient(90deg,#8c8c8c 0 1px,transparent 1px 2px)"></div>
<div class="a" style="left:21px;top:409px;width:9px;height:9px;background:linear-gradient(#fff,#e2e2e2);border:1px solid #8e8f8f"></div>
<div class="a" style="left:23px;top:413px;width:5px;height:1px;background:#000"></div>
<svg class="a" style="left:37px;top:404px;" width="20" height="19" viewBox="0 0 20 19"><circle cx="7" cy="6" r="4" fill="#f0c030" stroke="#a07a10"/><path d="M1 17 q1 -7 6 -7 q5 0 6 7z" fill="#3cb43c" stroke="#1d7a1d"/><circle cx="12" cy="6" r="4" fill="#f5cf55" stroke="#a07a10"/><path d="M6 18 q1 -8 6 -8 q5 0 6 8z" fill="#f2c744" stroke="#a07a10"/></svg>
<div class="t" style="left:60px;top:406px;font-size:13px;color:#000;"><span style="font-size:12px">账户</span></div>
<div class="a" style="left:46px;top:423px;width:1px;height:7px;background:repeating-linear-gradient(#8c8c8c 0 1px,transparent 1px 2px)"></div>
<div class="a" style="left:51px;top:434px;width:7px;height:1px;background:repeating-linear-gradient(90deg,#8c8c8c 0 1px,transparent 1px 2px)"></div>
<div class="a" style="left:42px;top:430px;width:9px;height:9px;background:linear-gradient(#fff,#e2e2e2);border:1px solid #8e8f8f"></div>
<div class="a" style="left:44px;top:434px;width:5px;height:1px;background:#000"></div>
<svg class="a" style="left:58px;top:425px;" width="12" height="17" viewBox="0 0 12 17"><path d="M1 3 l4 -2 h6 v15 h-10z" fill="#5aa6e8" stroke="#1f5fa8"/><rect x="6" y="4" width="3" height="9" fill="#cde6fa"/></svg>
<div class="t" style="left:81px;top:427px;font-size:13px;color:#000;">ProfitMarketHK-Live2</div>
<div class="a" style="left:67px;top:444px;width:1px;height:10px;background:repeating-linear-gradient(#8c8c8c 0 1px,transparent 1px 2px)"></div>
<div class="a" style="left:67px;top:453px;width:11px;height:1px;background:repeating-linear-gradient(90deg,#8c8c8c 0 1px,transparent 1px 2px)"></div>
<svg class="a" style="left:80px;top:445px;" width="15" height="16" viewBox="0 0 15 16"><circle cx="7.5" cy="5" r="4" fill="#f5cf55" stroke="#a07a10"/><path d="M1 16 q1 -7 6.5 -7 q5.5 0 6.5 7z" fill="#f2c744" stroke="#a07a10"/></svg>
<div class="t" style="left:102px;top:447px;font-size:13px;color:#000;">20000</div>
<svg class="a" style="left:160px;top:449px;" width="16" height="10" viewBox="0 0 16 10"><path d="M1.5 0.5h2M3 2v5M0.5 8.5h2.5M13 0.5h2M14 3v5M13.5 8.5h2" stroke="#333" stroke-width="1"/></svg>
<div class="a" style="left:30px;top:474px;width:7px;height:1px;background:repeating-linear-gradient(90deg,#8c8c8c 0 1px,transparent 1px 2px)"></div>
<div class="a" style="left:21px;top:470px;width:9px;height:9px;background:linear-gradient(#fff,#e2e2e2);border:1px solid #8e8f8f"></div>
<div class="a" style="left:23px;top:474px;width:5px;height:1px;background:#000"></div>
<svg class="a" style="left:38px;top:465px;" width="16" height="16" viewBox="0 0 16 16"><rect x="0.5" y="0.5" width="15" height="15" rx="2" fill="#f7dc6a" stroke="#b38c14"/><text x="5" y="13" font-size="12" font-style="italic" font-family="Liberation Serif" fill="#8a5a00">f</text></svg>
<div class="t" style="left:60px;top:467px;font-size:13px;color:#000;"><span style="font-size:12px">技术指标</span></div>
<div class="a" style="left:46px;top:486px;width:8px;height:1px;background:repeating-linear-gradient(90deg,#8c8c8c 0 1px,transparent 1px 2px)"></div>
<div class="a" style="left:12px;top:486px;width:308px;height:1px;background:#000"></div>
<div class="a" style="left:14px;top:486px;width:40px;height:22px;background:#fff;border:1px solid #000;border-top:none;border-right-width:2px;border-bottom-width:2px"></div>
<div class="t" style="left:23px;top:490px;font-size:13px;color:#000;"><span style="font-size:12px">常用</span></div>
<div class="t" style="left:68px;top:490px;font-size:13px;color:#7c7c7c;"><span style="font-size:12px">收藏夹</span></div>
<div class="a" style="left:114px;top:490px;width:1px;height:14px;background:#6a6a6a"></div>
<div class="a" style="left:8px;top:511px;width:314px;height:1px;background:#d0d0d0"></div>
<svg class="a" style="left:326px;top:105px;overflow:hidden" width="612" height="387" viewBox="0 0 612 387"><rect x="0" y="0" width="612" height="387" fill="#000"/><path d="M4 33.5h3 M10 33.5h3 M16 33.5h3 M22 33.5h3 M28 33.5h3 M34 33.5h3 M40 33.5h3 M46 33.5h3 M52 33.5h3 M58 33.5h3 M64 33.5h3 M70 33.5h3 M76 33.5h3 M82 33.5h3 M88 33.5h3 M94 33.5h3 M100 33.5h3 M106 33.5h3 M112 33.5h3 M118 33.5h3 M124 33.5h3 M130 33.5h3 M136 33.5h3 M142 33.5h3 M148 33.5h3 M154 33.5h3 M160 33.5h3 M166 33.5h3 M172 33.5h3 M178 33.5h3 M184 33.5h3 M190 33.5h3 M196 33.5h3 M202 33.5h3 M208 33.5h3 M214 33.5h3 M220 33.5h3 M226 33.5h3 M232 33.5h3 M238 33.5h3 M244 33.5h3 M250 33.5h3 M256 33.5h3 M262 33.5h3 M268 33.5h3 M274 33.5h3 M280 33.5h3 M286 33.5h3 M292 33.5h3 M298 33.5h3 M304 33.5h3 M310 33.5h3 M316 33.5h3 M322 33.5h3 M328 33.5h3 M334 33.5h3 M340 33.5h3 M346 33.5h3 M352 33.5h3 M358 33.5h3 M364 33.5h3 M370 33.5h3 M376 33.5h3 M382 33.5h3 M388 33.5h3 M394 33.5h3 M400 33.5h3 M406 33.5h3 M412 33.5h3 M418 33.5h3 M424 33.5h3 M430 33.5h3 M436 33.5h3 M442 33.5h3 M448 33.5h3 M454 33.5h3 M460 33.5h3 M466 33.5h3 M472 33.5h3 M478 33.5h3 M484 33.5h3 M490 33.5h3 M496 33.5h3 M502 33.5h3 M508 33.5h3 M514 33.5h3 M520 33.5h3 M526 33.5h3 M532 33.5h3 M538 33.5h3 M544 33.5h3 M550 33.5h3 M556 33.5h3 M562 33.5h3 M4 66.5h3 M10 66.5h3 M16 66.5h3 M22 66.5h3 M28 66.5h3 M34 66.5h3 M40 66.5h3 M46 66.5h3 M52 66.5h3 M58 66.5h3 M64 66.5h3 M70 66.5h3 M76 66.5h3 M82 66.5h3 M88 66.5h3 M94 66.5h3 M100 66.5h3 M106 66.5h3 M112 66.5h3 M118 66.5h3 M124 66.5h3 M130 66.5h3 M136 66.5h3 M142 66.5h3 M148 66.5h3 M154 66.5h3 M160 66.5h3 M166 66.5h3 M172 66.5h3 M178 66.5h3 M184 66.5h3 M190 66.5h3 M196 66.5h3 M202 66.5h3 M208 66.5h3 M214 66.5h3 M220 66.5h3 M226 66.5h3 M232 66.5h3 M238 66.5h3 M244 66.5h3 M250 66.5h3 M256 66.5h3 M262 66.5h3 M268 66.5h3 M274 66.5h3 M280 66.5h3 M286 66.5h3 M292 66.5h3 M298 66.5h3 M304 66.5h3 M310 66.5h3 M316 66.5h3 M322 66.5h3 M328 66.5h3 M334 66.5h3 M340 66.5h3 M346 66.5h3 M352 66.5h3 M358 66.5h3 M364 66.5h3 M370 66.5h3 M376 66.5h3 M382 66.5h3 M388 66.5h3 M394 66.5h3 M400 66.5h3 M406 66.5h3 M412 66.5h3 M418 66.5h3 M424 66.5h3 M430 66.5h3 M436 66.5h3 M442 66.5h3 M448 66.5h3 M454 66.5h3 M460 66.5h3 M466 66.5h3 M472 66.5h3 M478 66.5h3 M484 66.5h3 M490 66.5h3 M496 66.5h3 M502 66.5h3 M508 66.5h3 M514 66.5h3 M520 66.5h3 M526 66.5h3 M532 66.5h3 M538 66.5h3 M544 66.5h3 M550 66.5h3 M556 66.5h3 M562 66.5h3 M4 99.5h3 M10 99.5h3 M16 99.5h3 M22 99.5h3 M28 99.5h3 M34 99.5h3 M40 99.5h3 M46 99.5h3 M52 99.5h3 M58 99.5h3 M64 99.5h3 M70 99.5h3 M76 99.5h3 M82 99.5h3 M88 99.5h3 M94 99.5h3 M100 99.5h3 M106 99.5h3 M112 99.5h3 M118 99.5h3 M124 99.5h3 M130 99.5h3 M136 99.5h3 M142 99.5h3 M148 99.5h3 M154 99.5h3 M160 99.5h3 M166 99.5h3 M172 99.5h3 M178 99.5h3 M184 99.5h3 M190 99.5h3 M196 99.5h3 M202 99.5h3 M208 99.5h3 M214 99.5h3 M220 99.5h3 M226 99.5h3 M232 99.5h3 M238 99.5h3 M244 99.5h3 M250 99.5h3 M256 99.5h3 M262 99.5h3 M268 99.5h3 M274 99.5h3 M280 99.5h3 M286 99.5h3 M292 99.5h3 M298 99.5h3 M304 99.5h3 M310 99.5h3 M316 99.5h3 M322 99.5h3 M328 99.5h3 M334 99.5h3 M340 99.5h3 M346 99.5h3 M352 99.5h3 M358 99.5h3 M364 99.5h3 M370 99.5h3 M376 99.5h3 M382 99.5h3 M388 99.5h3 M394 99.5h3 M400 99.5h3 M406 99.5h3 M412 99.5h3 M418 99.5h3 M424 99.5h3 M430 99.5h3 M436 99.5h3 M442 99.5h3 M448 99.5h3 M454 99.5h3 M460 99.5h3 M466 99.5h3 M472 99.5h3 M478 99.5h3 M484 99.5h3 M490 99.5h3 M496 99.5h3 M502 99.5h3 M508 99.5h3 M514 99.5h3 M520 99.5h3 M526 99.5h3 M532 99.5h3 M538 99.5h3 M544 99.5h3 M550 99.5h3 M556 99.5h3 M562 99.5h3 M4 132.5h3 M10 132.5h3 M16 132.5h3 M22 132.5h3 M28 132.5h3 M34 132.5h3 M40 132.5h3 M46 132.5h3 M52 132.5h3 M58 132.5h3 M64 132.5h3 M70 132.5h3 M76 132.5h3 M82 132.5h3 M88 132.5h3 M94 132.5h3 M100 132.5h3 M106 132.5h3 M112 132.5h3 M118 132.5h3 M124 132.5h3 M130 132.5h3 M136 132.5h3 M142 132.5h3 M148 132.5h3 M154 132.5h3 M160 132.5h3 M166 132.5h3 M172 132.5h3 M178 132.5h3 M184 132.5h3 M190 132.5h3 M196 132.5h3 M202 132.5h3 M208 132.5h3 M214 132.5h3 M220 132.5h3 M226 132.5h3 M232 132.5h3 M238 132.5h3 M244 132.5h3 M250 132.5h3 M256 132.5h3 M262 132.5h3 M268 132.5h3 M274 132.5h3 M280 132.5h3 M286 132.5h3 M292 132.5h3 M298 132.5h3 M304 132.5h3 M310 132.5h3 M316 132.5h3 M322 132.5h3 M328 132.5h3 M334 132.5h3 M340 132.5h3 M346 132.5h3 M352 132.5h3 M358 132.5h3 M364 132.5h3 M370 132.5h3 M376 132.5h3 M382 132.5h3 M388 132.5h3 M394 132.5h3 M400 132.5h3 M406 132.5h3 M412 132.5h3 M418 132.5h3 M424 132.5h3 M430 132.5h3 M436 132.5h3 M442 132.5h3 M448 132.5h3 M454 132.5h3 M460 132.5h3 M466 132.5h3 M472 132.5h3 M478 132.5h3 M484 132.5h3 M490 132.5h3 M496 132.5h3 M502 132.5h3 M508 132.5h3 M514 132.5h3 M520 132.5h3 M526 132.5h3 M532 132.5h3 M538 132.5h3 M544 132.5h3 M550 132.5h3 M556 132.5h3 M562 132.5h3 M4 165.5h3 M10 165.5h3 M16 165.5h3 M22 165.5h3 M28 165.5h3 M34 165.5h3 M40 165.5h3 M46 165.5h3 M52 165.5h3 M58 165.5h3 M64 165.5h3 M70 165.5h3 M76 165.5h3 M82 165.5h3 M88 165.5h3 M94 165.5h3 M100 165.5h3 M106 165.5h3 M112 165.5h3 M118 165.5h3 M124 165.5h3 M130 165.5h3 M136 165.5h3 M142 165.5h3 M148 165.5h3 M154 165.5h3 M160 165.5h3 M166 165.5h3 M172 165.5h3 M178 165.5h3 M184 165.5h3 M190 165.5h3 M196 165.5h3 M202 165.5h3 M208 165.5h3 M214 165.5h3 M220 165.5h3 M226 165.5h3 M232 165.5h3 M238 165.5h3 M244 165.5h3 M250 165.5h3 M256 165.5h3 M262 165.5h3 M268 165.5h3 M274 165.5h3 M280 165.5h3 M286 165.5h3 M292 165.5h3 M298 165.5h3 M304 165.5h3 M310 165.5h3 M316 165.5h3 M322 165.5h3 M328 165.5h3 M334 165.5h3 M340 165.5h3 M346 165.5h3 M352 165.5h3 M358 165.5h3 M364 165.5h3 M370 165.5h3 M376 165.5h3 M382 165.5h3 M388 165.5h3 M394 165.5h3 M400 165.5h3 M406 165.5h3 M412 165.5h3 M418 165.5h3 M424 165.5h3 M430 165.5h3 M436 165.5h3 M442 165.5h3 M448 165.5h3 M454 165.5h3 M460 165.5h3 M466 165.5h3 M472 165.5h3 M478 165.5h3 M484 165.5h3 M490 165.5h3 M496 165.5h3 M502 165.5h3 M508 165.5h3 M514 165.5h3 M520 165.5h3 M526 165.5h3 M532 165.5h3 M538 165.5h3 M544 165.5h3 M550 165.5h3 M556 165.5h3 M562 165.5h3 M4 198.5h3 M10 198.5h3 M16 198.5h3 M22 198.5h3 M28 198.5h3 M34 198.5h3 M40 198.5h3 M46 198.5h3 M52 198.5h3 M58 198.5h3 M64 198.5h3 M70 198.5h3 M76 198.5h3 M82 198.5h3 M88 198.5h3 M94 198.5h3 M100 198.5h3 M106 198.5h3 M112 198.5h3 M118 198.5h3 M124 198.5h3 M130 198.5h3 M136 198.5h3 M142 198.5h3 M148 198.5h3 M154 198.5h3 M160 198.5h3 M166 198.5h3 M172 198.5h3 M178 198.5h3 M184 198.5h3 M190 198.5h3 M196 198.5h3 M202 198.5h3 M208 198.5h3 M214 198.5h3 M220 198.5h3 M226 198.5h3 M232 198.5h3 M238 198.5h3 M244 198.5h3 M250 198.5h3 M256 198.5h3 M262 198.5h3 M268 198.5h3 M274 198.5h3 M280 198.5h3 M286 198.5h3 M292 198.5h3 M298 198.5h3 M304 198.5h3 M310 198.5h3 M316 198.5h3 M322 198.5h3 M328 198.5h3 M334 198.5h3 M340 198.5h3 M346 198.5h3 M352 198.5h3 M358 198.5h3 M364 198.5h3 M370 198.5h3 M376 198.5h3 M382 198.5h3 M388 198.5h3 M394 198.5h3 M400 198.5h3 M406 198.5h3 M412 198.5h3 M418 198.5h3 M424 198.5h3 M430 198.5h3 M436 198.5h3 M442 198.5h3 M448 198.5h3 M454 198.5h3 M460 198.5h3 M466 198.5h3 M472 198.5h3 M478 198.5h3 M484 198.5h3 M490 198.5h3 M496 198.5h3 M502 198.5h3 M508 198.5h3 M514 198.5h3 M520 198.5h3 M526 198.5h3 M532 198.5h3 M538 198.5h3 M544 198.5h3 M550 198.5h3 M556 198.5h3 M562 198.5h3 M4 231.5h3 M10 231.5h3 M16 231.5h3 M22 231.5h3 M28 231.5h3 M34 231.5h3 M40 231.5h3 M46 231.5h3 M52 231.5h3 M58 231.5h3 M64 231.5h3 M70 231.5h3 M76 231.5h3 M82 231.5h3 M88 231.5h3 M94 231.5h3 M100 231.5h3 M106 231.5h3 M112 231.5h3 M118 231.5h3 M124 231.5h3 M130 231.5h3 M136 231.5h3 M142 231.5h3 M148 231.5h3 M154 231.5h3 M160 231.5h3 M166 231.5h3 M172 231.5h3 M178 231.5h3 M184 231.5h3 M190 231.5h3 M196 231.5h3 M202 231.5h3 M208 231.5h3 M214 231.5h3 M220 231.5h3 M226 231.5h3 M232 231.5h3 M238 231.5h3 M244 231.5h3 M250 231.5h3 M256 231.5h3 M262 231.5h3 M268 231.5h3 M274 231.5h3 M280 231.5h3 M286 231.5h3 M292 231.5h3 M298 231.5h3 M304 231.5h3 M310 231.5h3 M316 231.5h3 M322 231.5h3 M328 231.5h3 M334 231.5h3 M340 231.5h3 M346 231.5h3 M352 231.5h3 M358 231.5h3 M364 231.5h3 M370 231.5h3 M376 231.5h3 M382 231.5h3 M388 231.5h3 M394 231.5h3 M400 231.5h3 M406 231.5h3 M412 231.5h3 M418 231.5h3 M424 231.5h3 M430 231.5h3 M436 231.5h3 M442 231.5h3 M448 231.5h3 M454 231.5h3 M460 231.5h3 M466 231.5h3 M472 231.5h3 M478 231.5h3 M484 231.5h3 M490 231.5h3 M496 231.5h3 M502 231.5h3 M508 231.5h3 M514 231.5h3 M520 231.5h3 M526 231.5h3 M532 231.5h3 M538 231.5h3 M544 231.5h3 M550 231.5h3 M556 231.5h3 M562 231.5h3 M4 264.5h3 M10 264.5h3 M16 264.5h3 M22 264.5h3 M28 264.5h3 M34 264.5h3 M40 264.5h3 M46 264.5h3 M52 264.5h3 M58 264.5h3 M64 264.5h3 M70 264.5h3 M76 264.5h3 M82 264.5h3 M88 264.5h3 M94 264.5h3 M100 264.5h3 M106 264.5h3 M112 264.5h3 M118 264.5h3 M124 264.5h3 M130 264.5h3 M136 264.5h3 M142 264.5h3 M148 264.5h3 M154 264.5h3 M160 264.5h3 M166 264.5h3 M172 264.5h3 M178 264.5h3 M184 264.5h3 M190 264.5h3 M196 264.5h3 M202 264.5h3 M208 264.5h3 M214 264.5h3 M220 264.5h3 M226 264.5h3 M232 264.5h3 M238 264.5h3 M244 264.5h3 M250 264.5h3 M256 264.5h3 M262 264.5h3 M268 264.5h3 M274 264.5h3 M280 264.5h3 M286 264.5h3 M292 264.5h3 M298 264.5h3 M304 264.5h3 M310 264.5h3 M316 264.5h3 M322 264.5h3 M328 264.5h3 M334 264.5h3 M340 264.5h3 M346 264.5h3 M352 264.5h3 M358 264.5h3 M364 264.5h3 M370 264.5h3 M376 264.5h3 M382 264.5h3 M388 264.5h3 M394 264.5h3 M400 264.5h3 M406 264.5h3 M412 264.5h3 M418 264.5h3 M424 264.5h3 M430 264.5h3 M436 264.5h3 M442 264.5h3 M448 264.5h3 M454 264.5h3 M460 264.5h3 M466 264.5h3 M472 264.5h3 M478 264.5h3 M484 264.5h3 M490 264.5h3 M496 264.5h3 M502 264.5h3 M508 264.5h3 M514 264.5h3 M520 264.5h3 M526 264.5h3 M532 264.5h3 M538 264.5h3 M544 264.5h3 M550 264.5h3 M556 264.5h3 M562 264.5h3 M4 297.5h3 M10 297.5h3 M16 297.5h3 M22 297.5h3 M28 297.5h3 M34 297.5h3 M40 297.5h3 M46 297.5h3 M52 297.5h3 M58 297.5h3 M64 297.5h3 M70 297.5h3 M76 297.5h3 M82 297.5h3 M88 297.5h3 M94 297.5h3 M100 297.5h3 M106 297.5h3 M112 297.5h3 M118 297.5h3 M124 297.5h3 M130 297.5h3 M136 297.5h3 M142 297.5h3 M148 297.5h3 M154 297.5h3 M160 297.5h3 M166 297.5h3 M172 297.5h3 M178 297.5h3 M184 297.5h3 M190 297.5h3 M196 297.5h3 M202 297.5h3 M208 297.5h3 M214 297.5h3 M220 297.5h3 M226 297.5h3 M232 297.5h3 M238 297.5h3 M244 297.5h3 M250 297.5h3 M256 297.5h3 M262 297.5h3 M268 297.5h3 M274 297.5h3 M280 297.5h3 M286 297.5h3 M292 297.5h3 M298 297.5h3 M304 297.5h3 M310 297.5h3 M316 297.5h3 M322 297.5h3 M328 297.5h3 M334 297.5h3 M340 297.5h3 M346 297.5h3 M352 297.5h3 M358 297.5h3 M364 297.5h3 M370 297.5h3 M376 297.5h3 M382 297.5h3 M388 297.5h3 M394 297.5h3 M400 297.5h3 M406 297.5h3 M412 297.5h3 M418 297.5h3 M424 297.5h3 M430 297.5h3 M436 297.5h3 M442 297.5h3 M448 297.5h3 M454 297.5h3 M460 297.5h3 M466 297.5h3 M472 297.5h3 M478 297.5h3 M484 297.5h3 M490 297.5h3 M496 297.5h3 M502 297.5h3 M508 297.5h3 M514 297.5h3 M520 297.5h3 M526 297.5h3 M532 297.5h3 M538 297.5h3 M544 297.5h3 M550 297.5h3 M556 297.5h3 M562 297.5h3 M4 330.5h3 M10 330.5h3 M16 330.5h3 M22 330.5h3 M28 330.5h3 M34 330.5h3 M40 330.5h3 M46 330.5h3 M52 330.5h3 M58 330.5h3 M64 330.5h3 M70 330.5h3 M76 330.5h3 M82 330.5h3 M88 330.5h3 M94 330.5h3 M100 330.5h3 M106 330.5h3 M112 330.5h3 M118 330.5h3 M124 330.5h3 M130 330.5h3 M136 330.5h3 M142 330.5h3 M148 330.5h3 M154 330.5h3 M160 330.5h3 M166 330.5h3 M172 330.5h3 M178 330.5h3 M184 330.5h3 M190 330.5h3 M196 330.5h3 M202 330.5h3 M208 330.5h3 M214 330.5h3 M220 330.5h3 M226 330.5h3 M232 330.5h3 M238 330.5h3 M244 330.5h3 M250 330.5h3 M256 330.5h3 M262 330.5h3 M268 330.5h3 M274 330.5h3 M280 330.5h3 M286 330.5h3 M292 330.5h3 M298 330.5h3 M304 330.5h3 M310 330.5h3 M316 330.5h3 M322 330.5h3 M328 330.5h3 M334 330.5h3 M340 330.5h3 M346 330.5h3 M352 330.5h3 M358 330.5h3 M364 330.5h3 M370 330.5h3 M376 330.5h3 M382 330.5h3 M388 330.5h3 M394 330.5h3 M400 330.5h3 M406 330.5h3 M412 330.5h3 M418 330.5h3 M424 330.5h3 M430 330.5h3 M436 330.5h3 M442 330.5h3 M448 330.5h3 M454 330.5h3 M460 330.5h3 M466 330.5h3 M472 330.5h3 M478 330.5h3 M484 330.5h3 M490 330.5h3 M496 330.5h3 M502 330.5h3 M508 330.5h3 M514 330.5h3 M520 330.5h3 M526 330.5h3 M532 330.5h3 M538 330.5h3 M544 330.5h3 M550 330.5h3 M556 330.5h3 M562 330.5h3 M4 363.5h3 M10 363.5h3 M16 363.5h3 M22 363.5h3 M28 363.5h3 M34 363.5h3 M40 363.5h3 M46 363.5h3 M52 363.5h3 M58 363.5h3 M64 363.5h3 M70 363.5h3 M76 363.5h3 M82 363.5h3 M88 363.5h3 M94 363.5h3 M100 363.5h3 M106 363.5h3 M112 363.5h3 M118 363.5h3 M124 363.5h3 M130 363.5h3 M136 363.5h3 M142 363.5h3 M148 363.5h3 M154 363.5h3 M160 363.5h3 M166 363.5h3 M172 363.5h3 M178 363.5h3 M184 363.5h3 M190 363.5h3 M196 363.5h3 M202 363.5h3 M208 363.5h3 M214 363.5h3 M220 363.5h3 M226 363.5h3 M232 363.5h3 M238 363.5h3 M244 363.5h3 M250 363.5h3 M256 363.5h3 M262 363.5h3 M268 363.5h3 M274 363.5h3 M280 363.5h3 M286 363.5h3 M292 363.5h3 M298 363.5h3 M304 363.5h3 M310 363.5h3 M316 363.5h3 M322 363.5h3 M328 363.5h3 M334 363.5h3 M340 363.5h3 M346 363.5h3 M352 363.5h3 M358 363.5h3 M364 363.5h3 M370 363.5h3 M376 363.5h3 M382 363.5h3 M388 363.5h3 M394 363.5h3 M400 363.5h3 M406 363.5h3 M412 363.5h3 M418 363.5h3 M424 363.5h3 M430 363.5h3 M436 363.5h3 M442 363.5h3 M448 363.5h3 M454 363.5h3 M460 363.5h3 M466 363.5h3 M472 363.5h3 M478 363.5h3 M484 363.5h3 M490 363.5h3 M496 363.5h3 M502 363.5h3 M508 363.5h3 M514 363.5h3 M520 363.5h3 M526 363.5h3 M532 363.5h3 M538 363.5h3 M544 363.5h3 M550 363.5h3 M556 363.5h3 M562 363.5h3 M35.5 3v3 M35.5 9v3 M35.5 15v3 M35.5 21v3 M35.5 27v3 M35.5 33v3 M35.5 39v3 M35.5 45v3 M35.5 51v3 M35.5 57v3 M35.5 63v3 M35.5 69v3 M35.5 75v3 M35.5 81v3 M35.5 87v3 M35.5 93v3 M35.5 99v3 M35.5 105v3 M35.5 111v3 M35.5 117v3 M35.5 123v3 M35.5 129v3 M35.5 135v3 M35.5 141v3 M35.5 147v3 M35.5 153v3 M35.5 159v3 M35.5 165v3 M35.5 171v3 M35.5 177v3 M35.5 183v3 M35.5 189v3 M35.5 195v3 M35.5 201v3 M35.5 207v3 M35.5 213v3 M35.5 219v3 M35.5 225v3 M35.5 231v3 M35.5 237v3 M35.5 243v3 M35.5 249v3 M35.5 255v3 M35.5 261v3 M35.5 267v3 M35.5 273v3 M35.5 279v3 M35.5 285v3 M35.5 291v3 M35.5 297v3 M35.5 303v3 M35.5 309v3 M35.5 315v3 M35.5 321v3 M35.5 327v3 M35.5 333v3 M35.5 339v3 M35.5 345v3 M35.5 351v3 M35.5 357v3 M35.5 363v3 M67.5 3v3 M67.5 9v3 M67.5 15v3 M67.5 21v3 M67.5 27v3 M67.5 33v3 M67.5 39v3 M67.5 45v3 M67.5 51v3 M67.5 57v3 M67.5 63v3 M67.5 69v3 M67.5 75v3 M67.5 81v3 M67.5 87v3 M67.5 93v3 M67.5 99v3 M67.5 105v3 M67.5 111v3 M67.5 117v3 M67.5 123v3 M67.5 129v3 M67.5 135v3 M67.5 141v3 M67.5 147v3 M67.5 153v3 M67.5 159v3 M67.5 165v3 M67.5 171v3 M67.5 177v3 M67.5 183v3 M67.5 189v3 M67.5 195v3 M67.5 201v3 M67.5 207v3 M67.5 213v3 M67.5 219v3 M67.5 225v3 M67.5 231v3 M67.5 237v3 M67.5 243v3 M67.5 249v3 M67.5 255v3 M67.5 261v3 M67.5 267v3 M67.5 273v3 M67.5 279v3 M67.5 285v3 M67.5 291v3 M67.5 297v3 M67.5 303v3 M67.5 309v3 M67.5 315v3 M67.5 321v3 M67.5 327v3 M67.5 333v3 M67.5 339v3 M67.5 345v3 M67.5 351v3 M67.5 357v3 M67.5 363v3 M99.5 3v3 M99.5 9v3 M99.5 15v3 M99.5 21v3 M99.5 27v3 M99.5 33v3 M99.5 39v3 M99.5 45v3 M99.5 51v3 M99.5 57v3 M99.5 63v3 M99.5 69v3 M99.5 75v3 M99.5 81v3 M99.5 87v3 M99.5 93v3 M99.5 99v3 M99.5 105v3 M99.5 111v3 M99.5 117v3 M99.5 123v3 M99.5 129v3 M99.5 135v3 M99.5 141v3 M99.5 147v3 M99.5 153v3 M99.5 159v3 M99.5 165v3 M99.5 171v3 M99.5 177v3 M99.5 183v3 M99.5 189v3 M99.5 195v3 M99.5 201v3 M99.5 207v3 M99.5 213v3 M99.5 219v3 M99.5 225v3 M99.5 231v3 M99.5 237v3 M99.5 243v3 M99.5 249v3 M99.5 255v3 M99.5 261v3 M99.5 267v3 M99.5 273v3 M99.5 279v3 M99.5 285v3 M99.5 291v3 M99.5 297v3 M99.5 303v3 M99.5 309v3 M99.5 315v3 M99.5 321v3 M99.5 327v3 M99.5 333v3 M99.5 339v3 M99.5 345v3 M99.5 351v3 M99.5 357v3 M99.5 363v3 M131.5 3v3 M131.5 9v3 M131.5 15v3 M131.5 21v3 M131.5 27v3 M131.5 33v3 M131.5 39v3 M131.5 45v3 M131.5 51v3 M131.5 57v3 M131.5 63v3 M131.5 69v3 M131.5 75v3 M131.5 81v3 M131.5 87v3 M131.5 93v3 M131.5 99v3 M131.5 105v3 M131.5 111v3 M131.5 117v3 M131.5 123v3 M131.5 129v3 M131.5 135v3 M131.5 141v3 M131.5 147v3 M131.5 153v3 M131.5 159v3 M131.5 165v3 M131.5 171v3 M131.5 177v3 M131.5 183v3 M131.5 189v3 M131.5 195v3 M131.5 201v3 M131.5 207v3 M131.5 213v3 M131.5 219v3 M131.5 225v3 M131.5 231v3 M131.5 237v3 M131.5 243v3 M131.5 249v3 M131.5 255v3 M131.5 261v3 M131.5 267v3 M131.5 273v3 M131.5 279v3 M131.5 285v3 M131.5 291v3 M131.5 297v3 M131.5 303v3 M131.5 309v3 M131.5 315v3 M131.5 321v3 M131.5 327v3 M131.5 333v3 M131.5 339v3 M131.5 345v3 M131.5 351v3 M131.5 357v3 M131.5 363v3 M163.5 3v3 M163.5 9v3 M163.5 15v3 M163.5 21v3 M163.5 27v3 M163.5 33v3 M163.5 39v3 M163.5 45v3 M163.5 51v3 M163.5 57v3 M163.5 63v3 M163.5 69v3 M163.5 75v3 M163.5 81v3 M163.5 87v3 M163.5 93v3 M163.5 99v3 M163.5 105v3 M163.5 111v3 M163.5 117v3 M163.5 123v3 M163.5 129v3 M163.5 135v3 M163.5 141v3 M163.5 147v3 M163.5 153v3 M163.5 159v3 M163.5 165v3 M163.5 171v3 M163.5 177v3 M163.5 183v3 M163.5 189v3 M163.5 195v3 M163.5 201v3 M163.5 207v3 M163.5 213v3 M163.5 219v3 M163.5 225v3 M163.5 231v3 M163.5 237v3 M163.5 243v3 M163.5 249v3 M163.5 255v3 M163.5 261v3 M163.5 267v3 M163.5 273v3 M163.5 279v3 M163.5 285v3 M163.5 291v3 M163.5 297v3 M163.5 303v3 M163.5 309v3 M163.5 315v3 M163.5 321v3 M163.5 327v3 M163.5 333v3 M163.5 339v3 M163.5 345v3 M163.5 351v3 M163.5 357v3 M163.5 363v3 M195.5 3v3 M195.5 9v3 M195.5 15v3 M195.5 21v3 M195.5 27v3 M195.5 33v3 M195.5 39v3 M195.5 45v3 M195.5 51v3 M195.5 57v3 M195.5 63v3 M195.5 69v3 M195.5 75v3 M195.5 81v3 M195.5 87v3 M195.5 93v3 M195.5 99v3 M195.5 105v3 M195.5 111v3 M195.5 117v3 M195.5 123v3 M195.5 129v3 M195.5 135v3 M195.5 141v3 M195.5 147v3 M195.5 153v3 M195.5 159v3 M195.5 165v3 M195.5 171v3 M195.5 177v3 M195.5 183v3 M195.5 189v3 M195.5 195v3 M195.5 201v3 M195.5 207v3 M195.5 213v3 M195.5 219v3 M195.5 225v3 M195.5 231v3 M195.5 237v3 M195.5 243v3 M195.5 249v3 M195.5 255v3 M195.5 261v3 M195.5 267v3 M195.5 273v3 M195.5 279v3 M195.5 285v3 M195.5 291v3 M195.5 297v3 M195.5 303v3 M195.5 309v3 M195.5 315v3 M195.5 321v3 M195.5 327v3 M195.5 333v3 M195.5 339v3 M195.5 345v3 M195.5 351v3 M195.5 357v3 M195.5 363v3 M227.5 3v3 M227.5 9v3 M227.5 15v3 M227.5 21v3 M227.5 27v3 M227.5 33v3 M227.5 39v3 M227.5 45v3 M227.5 51v3 M227.5 57v3 M227.5 63v3 M227.5 69v3 M227.5 75v3 M227.5 81v3 M227.5 87v3 M227.5 93v3 M227.5 99v3 M227.5 105v3 M227.5 111v3 M227.5 117v3 M227.5 123v3 M227.5 129v3 M227.5 135v3 M227.5 141v3 M227.5 147v3 M227.5 153v3 M227.5 159v3 M227.5 165v3 M227.5 171v3 M227.5 177v3 M227.5 183v3 M227.5 189v3 M227.5 195v3 M227.5 201v3 M227.5 207v3 M227.5 213v3 M227.5 219v3 M227.5 225v3 M227.5 231v3 M227.5 237v3 M227.5 243v3 M227.5 249v3 M227.5 255v3 M227.5 261v3 M227.5 267v3 M227.5 273v3 M227.5 279v3 M227.5 285v3 M227.5 291v3 M227.5 297v3 M227.5 303v3 M227.5 309v3 M227.5 315v3 M227.5 321v3 M227.5 327v3 M227.5 333v3 M227.5 339v3 M227.5 345v3 M227.5 351v3 M227.5 357v3 M227.5 363v3 M259.5 3v3 M259.5 9v3 M259.5 15v3 M259.5 21v3 M259.5 27v3 M259.5 33v3 M259.5 39v3 M259.5 45v3 M259.5 51v3 M259.5 57v3 M259.5 63v3 M259.5 69v3 M259.5 75v3 M259.5 81v3 M259.5 87v3 M259.5 93v3 M259.5 99v3 M259.5 105v3 M259.5 111v3 M259.5 117v3 M259.5 123v3 M259.5 129v3 M259.5 135v3 M259.5 141v3 M259.5 147v3 M259.5 153v3 M259.5 159v3 M259.5 165v3 M259.5 171v3 M259.5 177v3 M259.5 183v3 M259.5 189v3 M259.5 195v3 M259.5 201v3 M259.5 207v3 M259.5 213v3 M259.5 219v3 M259.5 225v3 M259.5 231v3 M259.5 237v3 M259.5 243v3 M259.5 249v3 M259.5 255v3 M259.5 261v3 M259.5 267v3 M259.5 273v3 M259.5 279v3 M259.5 285v3 M259.5 291v3 M259.5 297v3 M259.5 303v3 M259.5 309v3 M259.5 315v3 M259.5 321v3 M259.5 327v3 M259.5 333v3 M259.5 339v3 M259.5 345v3 M259.5 351v3 M259.5 357v3 M259.5 363v3 M291.5 3v3 M291.5 9v3 M291.5 15v3 M291.5 21v3 M291.5 27v3 M291.5 33v3 M291.5 39v3 M291.5 45v3 M291.5 51v3 M291.5 57v3 M291.5 63v3 M291.5 69v3 M291.5 75v3 M291.5 81v3 M291.5 87v3 M291.5 93v3 M291.5 99v3 M291.5 105v3 M291.5 111v3 M291.5 117v3 M291.5 123v3 M291.5 129v3 M291.5 135v3 M291.5 141v3 M291.5 147v3 M291.5 153v3 M291.5 159v3 M291.5 165v3 M291.5 171v3 M291.5 177v3 M291.5 183v3 M291.5 189v3 M291.5 195v3 M291.5 201v3 M291.5 207v3 M291.5 213v3 M291.5 219v3 M291.5 225v3 M291.5 231v3 M291.5 237v3 M291.5 243v3 M291.5 249v3 M291.5 255v3 M291.5 261v3 M291.5 267v3 M291.5 273v3 M291.5 279v3 M291.5 285v3 M291.5 291v3 M291.5 297v3 M291.5 303v3 M291.5 309v3 M291.5 315v3 M291.5 321v3 M291.5 327v3 M291.5 333v3 M291.5 339v3 M291.5 345v3 M291.5 351v3 M291.5 357v3 M291.5 363v3 M323.5 3v3 M323.5 9v3 M323.5 15v3 M323.5 21v3 M323.5 27v3 M323.5 33v3 M323.5 39v3 M323.5 45v3 M323.5 51v3 M323.5 57v3 M323.5 63v3 M323.5 69v3 M323.5 75v3 M323.5 81v3 M323.5 87v3 M323.5 93v3 M323.5 99v3 M323.5 105v3 M323.5 111v3 M323.5 117v3 M323.5 123v3 M323.5 129v3 M323.5 135v3 M323.5 141v3 M323.5 147v3 M323.5 153v3 M323.5 159v3 M323.5 165v3 M323.5 171v3 M323.5 177v3 M323.5 183v3 M323.5 189v3 M323.5 195v3 M323.5 201v3 M323.5 207v3 M323.5 213v3 M323.5 219v3 M323.5 225v3 M323.5 231v3 M323.5 237v3 M323.5 243v3 M323.5 249v3 M323.5 255v3 M323.5 261v3 M323.5 267v3 M323.5 273v3 M323.5 279v3 M323.5 285v3 M323.5 291v3 M323.5 297v3 M323.5 303v3 M323.5 309v3 M323.5 315v3 M323.5 321v3 M323.5 327v3 M323.5 333v3 M323.5 339v3 M323.5 345v3 M323.5 351v3 M323.5 357v3 M323.5 363v3 M355.5 3v3 M355.5 9v3 M355.5 15v3 M355.5 21v3 M355.5 27v3 M355.5 33v3 M355.5 39v3 M355.5 45v3 M355.5 51v3 M355.5 57v3 M355.5 63v3 M355.5 69v3 M355.5 75v3 M355.5 81v3 M355.5 87v3 M355.5 93v3 M355.5 99v3 M355.5 105v3 M355.5 111v3 M355.5 117v3 M355.5 123v3 M355.5 129v3 M355.5 135v3 M355.5 141v3 M355.5 147v3 M355.5 153v3 M355.5 159v3 M355.5 165v3 M355.5 171v3 M355.5 177v3 M355.5 183v3 M355.5 189v3 M355.5 195v3 M355.5 201v3 M355.5 207v3 M355.5 213v3 M355.5 219v3 M355.5 225v3 M355.5 231v3 M355.5 237v3 M355.5 243v3 M355.5 249v3 M355.5 255v3 M355.5 261v3 M355.5 267v3 M355.5 273v3 M355.5 279v3 M355.5 285v3 M355.5 291v3 M355.5 297v3 M355.5 303v3 M355.5 309v3 M355.5 315v3 M355.5 321v3 M355.5 327v3 M355.5 333v3 M355.5 339v3 M355.5 345v3 M355.5 351v3 M355.5 357v3 M355.5 363v3 M387.5 3v3 M387.5 9v3 M387.5 15v3 M387.5 21v3 M387.5 27v3 M387.5 33v3 M387.5 39v3 M387.5 45v3 M387.5 51v3 M387.5 57v3 M387.5 63v3 M387.5 69v3 M387.5 75v3 M387.5 81v3 M387.5 87v3 M387.5 93v3 M387.5 99v3 M387.5 105v3 M387.5 111v3 M387.5 117v3 M387.5 123v3 M387.5 129v3 M387.5 135v3 M387.5 141v3 M387.5 147v3 M387.5 153v3 M387.5 159v3 M387.5 165v3 M387.5 171v3 M387.5 177v3 M387.5 183v3 M387.5 189v3 M387.5 195v3 M387.5 201v3 M387.5 207v3 M387.5 213v3 M387.5 219v3 M387.5 225v3 M387.5 231v3 M387.5 237v3 M387.5 243v3 M387.5 249v3 M387.5 255v3 M387.5 261v3 M387.5 267v3 M387.5 273v3 M387.5 279v3 M387.5 285v3 M387.5 291v3 M387.5 297v3 M387.5 303v3 M387.5 309v3 M387.5 315v3 M387.5 321v3 M387.5 327v3 M387.5 333v3 M387.5 339v3 M387.5 345v3 M387.5 351v3 M387.5 357v3 M387.5 363v3 M419.5 3v3 M419.5 9v3 M419.5 15v3 M419.5 21v3 M419.5 27v3 M419.5 33v3 M419.5 39v3 M419.5 45v3 M419.5 51v3 M419.5 57v3 M419.5 63v3 M419.5 69v3 M419.5 75v3 M419.5 81v3 M419.5 87v3 M419.5 93v3 M419.5 99v3 M419.5 105v3 M419.5 111v3 M419.5 117v3 M419.5 123v3 M419.5 129v3 M419.5 135v3 M419.5 141v3 M419.5 147v3 M419.5 153v3 M419.5 159v3 M419.5 165v3 M419.5 171v3 M419.5 177v3 M419.5 183v3 M419.5 189v3 M419.5 195v3 M419.5 201v3 M419.5 207v3 M419.5 213v3 M419.5 219v3 M419.5 225v3 M419.5 231v3 M419.5 237v3 M419.5 243v3 M419.5 249v3 M419.5 255v3 M419.5 261v3 M419.5 267v3 M419.5 273v3 M419.5 279v3 M419.5 285v3 M419.5 291v3 M419.5 297v3 M419.5 303v3 M419.5 309v3 M419.5 315v3 M419.5 321v3 M419.5 327v3 M419.5 333v3 M419.5 339v3 M419.5 345v3 M419.5 351v3 M419.5 357v3 M419.5 363v3 M451.5 3v3 M451.5 9v3 M451.5 15v3 M451.5 21v3 M451.5 27v3 M451.5 33v3 M451.5 39v3 M451.5 45v3 M451.5 51v3 M451.5 57v3 M451.5 63v3 M451.5 69v3 M451.5 75v3 M451.5 81v3 M451.5 87v3 M451.5 93v3 M451.5 99v3 M451.5 105v3 M451.5 111v3 M451.5 117v3 M451.5 123v3 M451.5 129v3 M451.5 135v3 M451.5 141v3 M451.5 147v3 M451.5 153v3 M451.5 159v3 M451.5 165v3 M451.5 171v3 M451.5 177v3 M451.5 183v3 M451.5 189v3 M451.5 195v3 M451.5 201v3 M451.5 207v3 M451.5 213v3 M451.5 219v3 M451.5 225v3 M451.5 231v3 M451.5 237v3 M451.5 243v3 M451.5 249v3 M451.5 255v3 M451.5 261v3 M451.5 267v3 M451.5 273v3 M451.5 279v3 M451.5 285v3 M451.5 291v3 M451.5 297v3 M451.5 303v3 M451.5 309v3 M451.5 315v3 M451.5 321v3 M451.5 327v3 M451.5 333v3 M451.5 339v3 M451.5 345v3 M451.5 351v3 M451.5 357v3 M451.5 363v3 M483.5 3v3 M483.5 9v3 M483.5 15v3 M483.5 21v3 M483.5 27v3 M483.5 33v3 M483.5 39v3 M483.5 45v3 M483.5 51v3 M483.5 57v3 M483.5 63v3 M483.5 69v3 M483.5 75v3 M483.5 81v3 M483.5 87v3 M483.5 93v3 M483.5 99v3 M483.5 105v3 M483.5 111v3 M483.5 117v3 M483.5 123v3 M483.5 129v3 M483.5 135v3 M483.5 141v3 M483.5 147v3 M483.5 153v3 M483.5 159v3 M483.5 165v3 M483.5 171v3 M483.5 177v3 M483.5 183v3 M483.5 189v3 M483.5 195v3 M483.5 201v3 M483.5 207v3 M483.5 213v3 M483.5 219v3 M483.5 225v3 M483.5 231v3 M483.5 237v3 M483.5 243v3 M483.5 249v3 M483.5 255v3 M483.5 261v3 M483.5 267v3 M483.5 273v3 M483.5 279v3 M483.5 285v3 M483.5 291v3 M483.5 297v3 M483.5 303v3 M483.5 309v3 M483.5 315v3 M483.5 321v3 M483.5 327v3 M483.5 333v3 M483.5 339v3 M483.5 345v3 M483.5 351v3 M483.5 357v3 M483.5 363v3 M515.5 3v3 M515.5 9v3 M515.5 15v3 M515.5 21v3 M515.5 27v3 M515.5 33v3 M515.5 39v3 M515.5 45v3 M515.5 51v3 M515.5 57v3 M515.5 63v3 M515.5 69v3 M515.5 75v3 M515.5 81v3 M515.5 87v3 M515.5 93v3 M515.5 99v3 M515.5 105v3 M515.5 111v3 M515.5 117v3 M515.5 123v3 M515.5 129v3 M515.5 135v3 M515.5 141v3 M515.5 147v3 M515.5 153v3 M515.5 159v3 M515.5 165v3 M515.5 171v3 M515.5 177v3 M515.5 183v3 M515.5 189v3 M515.5 195v3 M515.5 201v3 M515.5 207v3 M515.5 213v3 M515.5 219v3 M515.5 225v3 M515.5 231v3 M515.5 237v3 M515.5 243v3 M515.5 249v3 M515.5 255v3 M515.5 261v3 M515.5 267v3 M515.5 273v3 M515.5 279v3 M515.5 285v3 M515.5 291v3 M515.5 297v3 M515.5 303v3 M515.5 309v3 M515.5 315v3 M515.5 321v3 M515.5 327v3 M515.5 333v3 M515.5 339v3 M515.5 345v3 M515.5 351v3 M515.5 357v3 M515.5 363v3 M547.5 3v3 M547.5 9v3 M547.5 15v3 M547.5 21v3 M547.5 27v3 M547.5 33v3 M547.5 39v3 M547.5 45v3 M547.5 51v3 M547.5 57v3 M547.5 63v3 M547.5 69v3 M547.5 75v3 M547.5 81v3 M547.5 87v3 M547.5 93v3 M547.5 99v3 M547.5 105v3 M547.5 111v3 M547.5 117v3 M547.5 123v3 M547.5 129v3 M547.5 135v3 M547.5 141v3 M547.5 147v3 M547.5 153v3 M547.5 159v3 M547.5 165v3 M547.5 171v3 M547.5 177v3 M547.5 183v3 M547.5 189v3 M547.5 195v3 M547.5 201v3 M547.5 207v3 M547.5 213v3 M547.5 219v3 M547.5 225v3 M547.5 231v3 M547.5 237v3 M547.5 243v3 M547.5 249v3 M547.5 255v3 M547.5 261v3 M547.5 267v3 M547.5 273v3 M547.5 279v3 M547.5 285v3 M547.5 291v3 M547.5 297v3 M547.5 303v3 M547.5 309v3 M547.5 315v3 M547.5 321v3 M547.5 327v3 M547.5 333v3 M547.5 339v3 M547.5 345v3 M547.5 351v3 M547.5 357v3 M547.5 363v3" stroke="#778899" stroke-width="1" fill="none" shape-rendering="crispEdges"/><rect x="3" y="122" width="566" height="1" fill="#8d9aa8"/><path d="M3 303h1v20h-1zM5 311h1v12h-1zM7 311h1v12h-1zM9 293h1v16h-1zM11 277h1v40h-1zM13 273h1v15h-1zM15 278h1v36h-1zM17 274h1v33h-1zM19 292h1v15h-1zM21 282h1v24h-1zM23 277h1v16h-1zM25 271h1v22h-1zM27 263h1v13h-1zM29 270h1v34h-1zM31 267h1v20h-1zM33 269h1v19h-1zM35 260h1v37h-1zM37 276h1v18h-1zM39 275h1v26h-1zM41 280h1v25h-1zM43 286h1v14h-1zM45 282h1v17h-1zM47 282h1v19h-1zM49 293h1v61h-1zM51 289h1v23h-1zM53 297h1v15h-1zM55 288h1v41h-1zM57 311h1v12h-1zM59 305h1v19h-1zM61 289h1v35h-1zM63 315h1v19h-1zM65 312h1v25h-1zM67 299h1v31h-1zM69 301h1v16h-1zM71 285h1v27h-1zM73 270h1v35h-1zM75 273h1v17h-1zM77 276h1v11h-1zM79 269h1v17h-1zM81 267h1v12h-1zM83 257h1v13h-1zM85 263h1v31h-1zM87 279h1v17h-1zM89 286h1v19h-1zM91 292h1v13h-1zM93 290h1v24h-1zM95 283h1v20h-1zM97 276h1v21h-1zM99 273h1v24h-1zM101 270h1v22h-1zM103 275h1v16h-1zM105 269h1v20h-1zM107 259h1v21h-1zM109 264h1v10h-1zM111 254h1v19h-1zM113 267h1v22h-1zM115 265h1v23h-1zM117 263h1v25h-1zM119 247h1v26h-1zM121 259h1v13h-1zM123 263h1v19h-1zM125 265h1v18h-1zM127 259h1v19h-1zM129 254h1v36h-1zM131 261h1v15h-1zM133 232h1v46h-1zM135 191h1v92h-1zM137 258h1v27h-1zM139 266h1v25h-1zM141 275h1v22h-1zM143 273h1v11h-1zM145 276h1v25h-1zM147 279h1v27h-1zM149 284h1v17h-1zM151 271h1v14h-1zM153 268h1v7h-1zM155 263h1v11h-1zM157 265h1v15h-1zM159 275h1v30h-1zM161 274h1v31h-1zM163 271h1v18h-1zM165 262h1v30h-1zM167 280h1v25h-1zM169 283h1v17h-1zM171 279h1v15h-1zM173 278h1v18h-1zM175 283h1v11h-1zM177 270h1v19h-1zM179 259h1v16h-1zM181 255h1v16h-1zM183 258h1v23h-1zM185 258h1v16h-1zM187 258h1v18h-1zM189 242h1v23h-1zM191 248h1v18h-1zM193 231h1v28h-1zM195 225h1v29h-1zM197 214h1v25h-1zM199 215h1v39h-1zM201 238h1v16h-1zM203 248h1v29h-1zM205 239h1v14h-1zM207 210h1v33h-1zM209 199h1v32h-1zM211 183h1v23h-1zM213 180h1v25h-1zM215 183h1v13h-1zM217 136h1v60h-1zM219 139h1v56h-1zM221 156h1v92h-1zM223 221h1v35h-1zM225 209h1v34h-1zM227 213h1v11h-1zM229 211h1v23h-1zM231 212h1v20h-1zM233 214h1v20h-1zM235 218h1v17h-1zM237 212h1v25h-1zM239 203h1v24h-1zM241 190h1v35h-1zM243 190h1v15h-1zM245 193h1v42h-1zM247 213h1v24h-1zM249 223h1v24h-1zM251 205h1v38h-1zM253 208h1v41h-1zM255 218h1v29h-1zM257 212h1v25h-1zM259 200h1v17h-1zM261 185h1v23h-1zM263 186h1v15h-1zM265 184h1v18h-1zM267 172h1v32h-1zM269 177h1v37h-1zM271 178h1v25h-1zM273 166h1v42h-1zM275 177h1v38h-1zM277 202h1v39h-1zM279 185h1v76h-1zM281 230h1v22h-1zM283 214h1v32h-1zM285 195h1v32h-1zM287 190h1v35h-1zM289 203h1v22h-1zM291 206h1v14h-1zM293 153h1v37h-1zM295 174h1v56h-1zM297 204h1v17h-1zM299 189h1v21h-1zM301 186h1v15h-1zM303 170h1v28h-1zM305 184h1v21h-1zM307 146h1v52h-1zM309 49h1v104h-1zM311 63h1v40h-1zM313 78h1v31h-1zM315 68h1v39h-1zM317 47h1v37h-1zM319 64h1v25h-1zM321 70h1v62h-1zM323 57h1v24h-1zM325 56h1v18h-1zM327 58h1v32h-1zM329 80h1v17h-1zM331 91h1v34h-1zM333 114h1v21h-1zM335 113h1v13h-1zM337 104h1v17h-1zM339 91h1v18h-1zM341 57h1v64h-1zM343 81h1v62h-1zM345 123h1v18h-1zM347 132h1v41h-1zM349 141h1v20h-1zM351 109h1v32h-1zM353 86h1v45h-1zM355 83h1v30h-1zM357 68h1v44h-1zM359 66h1v28h-1zM361 65h1v32h-1zM363 66h1v33h-1zM365 74h1v29h-1zM367 83h1v52h-1zM369 88h1v34h-1zM371 95h1v31h-1zM373 103h1v26h-1zM375 112h1v30h-1zM377 125h1v16h-1zM379 135h1v12h-1zM381 138h1v8h-1zM383 133h1v30h-1zM385 139h1v24h-1zM387 109h1v56h-1zM389 90h1v29h-1zM391 100h1v14h-1zM393 93h1v19h-1zM395 101h1v40h-1zM397 106h1v30h-1zM399 99h1v28h-1zM401 80h1v43h-1zM403 71h1v23h-1zM405 73h1v24h-1zM407 59h1v31h-1zM409 56h1v28h-1zM411 71h1v26h-1zM413 78h1v21h-1zM415 71h1v28h-1zM417 82h1v17h-1zM419 88h1v11h-1zM421 73h1v31h-1zM423 66h1v27h-1zM425 62h1v48h-1zM427 87h1v28h-1zM429 70h1v33h-1zM431 62h1v22h-1zM433 34h1v47h-1zM435 22h1v41h-1zM437 28h1v18h-1zM439 23h1v19h-1zM441 25h1v24h-1zM443 41h1v15h-1zM445 27h1v92h-1zM447 56h1v23h-1zM449 42h1v30h-1zM451 63h1v50h-1zM453 108h1v61h-1zM455 146h1v52h-1zM457 126h1v77h-1zM459 173h1v74h-1zM461 194h1v51h-1zM463 232h1v45h-1zM465 268h1v29h-1zM467 252h1v42h-1zM469 265h1v93h-1zM471 304h1v35h-1zM473 286h1v26h-1zM475 281h1v70h-1zM477 240h1v61h-1zM479 188h1v69h-1zM481 183h1v44h-1zM483 195h1v28h-1zM485 198h1v36h-1zM487 231h1v57h-1zM489 155h1v84h-1zM491 174h1v26h-1zM493 126h1v54h-1zM495 124h1v41h-1zM497 141h1v41h-1zM499 160h1v42h-1zM501 157h1v34h-1zM503 158h1v18h-1zM505 136h1v37h-1zM507 113h1v42h-1zM509 98h1v32h-1zM511 99h1v23h-1zM513 97h1v20h-1zM515 97h1v24h-1zM517 101h1v54h-1zM519 141h1v19h-1zM521 132h1v25h-1zM523 133h1v12h-1zM525 130h1v16h-1zM527 94h1v51h-1zM529 87h1v21h-1zM531 76h1v28h-1zM533 91h1v41h-1zM535 123h1v15h-1zM537 127h1v20h-1zM539 125h1v23h-1zM541 122h1v31h-1zM543 133h1v27h-1zM545 126h1v29h-1zM547 97h1v39h-1zM549 96h1v24h-1zM551 107h1v20h-1zM553 93h1v34h-1zM555 91h1v30h-1zM557 99h1v23h-1zM559 103h1v19h-1zM561 113h1v19h-1zM563 122h1v33h-1z" fill="#00ff00" shape-rendering="crispEdges"/><path d="M2.5 3V366.5H569.5V3.5H2" stroke="#fff" fill="none" shape-rendering="crispEdges"/><rect x="570" y="33" width="3" height="1" fill="#fff"/><rect x="570" y="66" width="3" height="1" fill="#fff"/><rect x="570" y="99" width="3" height="1" fill="#fff"/><rect x="570" y="132" width="3" height="1" fill="#fff"/><rect x="570" y="165" width="3" height="1" fill="#fff"/><rect x="570" y="198" width="3" height="1" fill="#fff"/><rect x="570" y="231" width="3" height="1" fill="#fff"/><rect x="570" y="264" width="3" height="1" fill="#fff"/><rect x="570" y="297" width="3" height="1" fill="#fff"/><rect x="570" y="330" width="3" height="1" fill="#fff"/><rect x="570" y="363" width="3" height="1" fill="#fff"/><rect x="3" y="367" width="1" height="3" fill="#fff"/><rect x="67" y="367" width="1" height="3" fill="#fff"/><rect x="131" y="367" width="1" height="3" fill="#fff"/><rect x="195" y="367" width="1" height="3" fill="#fff"/><rect x="259" y="367" width="1" height="3" fill="#fff"/><rect x="323" y="367" width="1" height="3" fill="#fff"/><rect x="387" y="367" width="1" height="3" fill="#fff"/><rect x="451" y="367" width="1" height="3" fill="#fff"/><rect x="515" y="367" width="1" height="3" fill="#fff"/></svg>
<div class="t" style="left:901px;top:135px;font-size:10px;color:#fff;letter-spacing:-0.45px">6.93950</div>
<div class="t" style="left:901px;top:168px;font-size:10px;color:#fff;letter-spacing:-0.45px">6.93190</div>
<div class="t" style="left:901px;top:201px;font-size:10px;color:#fff;letter-spacing:-0.45px">6.92450</div>
<div class="t" style="left:901px;top:234px;font-size:10px;color:#fff;letter-spacing:-0.45px">6.91690</div>
<div class="t" style="left:901px;top:267px;font-size:10px;color:#fff;letter-spacing:-0.45px">6.90950</div>
<div class="t" style="left:901px;top:300px;font-size:10px;color:#fff;letter-spacing:-0.45px">6.90210</div>
<div class="t" style="left:901px;top:333px;font-size:10px;color:#fff;letter-spacing:-0.45px">6.89450</div>
<div class="t" style="left:901px;top:366px;font-size:10px;color:#fff;letter-spacing:-0.45px">6.88710</div>
<div class="t" style="left:901px;top:399px;font-size:10px;color:#fff;letter-spacing:-0.45px">6.87970</div>
<div class="t" style="left:901px;top:432px;font-size:10px;color:#fff;letter-spacing:-0.45px">6.87210</div>
<div class="t" style="left:901px;top:465px;font-size:10px;color:#fff;letter-spacing:-0.45px">6.86470</div>
<div class="a" style="left:897px;top:222px;width:41px;height:11px;background:#fff"></div>
<div class="t" style="left:901px;top:223px;font-size:10px;color:#000;letter-spacing:-0.45px">6.91933</div>
<div class="t" style="left:328px;top:476px;font-size:10px;color:#fff;letter-spacing:-0.22px">27 Sep 2018</div>
<div class="t" style="left:392px;top:476px;font-size:10px;color:#fff;letter-spacing:-0.22px">28 Sep 17:00</div>
<div class="t" style="left:456px;top:476px;font-size:10px;color:#fff;letter-spacing:-0.22px">2 Oct 07:00</div>
<div class="t" style="left:520px;top:476px;font-size:10px;color:#fff;letter-spacing:-0.22px">3 Oct 16:00</div>
<div class="t" style="left:584px;top:476px;font-size:10px;color:#fff;letter-spacing:-0.22px">5 Oct 02:00</div>
<div class="t" style="left:648px;top:476px;font-size:10px;color:#fff;letter-spacing:-0.22px">8 Oct 15:00</div>
<div class="t" style="left:712px;top:476px;font-size:10px;color:#fff;letter-spacing:-0.22px">10 Oct 01:00</div>
<div class="t" style="left:776px;top:476px;font-size:10px;color:#fff;letter-spacing:-0.22px">11 Oct 10:00</div>
<div class="t" style="left:840px;top:476px;font-size:10px;color:#fff;letter-spacing:-0.22px">15 Oct 00:00</div>
<svg class="a" style="left:332px;top:115px;" width="8" height="5" viewBox="0 0 8 5"><path d="M0 0H8L4 4.5Z" fill="#fff"/></svg>
<div class="t" style="left:344px;top:113px;font-size:10px;color:#fff;letter-spacing:-0.35px">USDCNH-,H1  6.91779 6.91937 6.91205 6.91933</div>
<div class="a" style="left:326px;top:492px;width:612px;height:2px;background:#fff"></div>
<div class="a" style="left:326px;top:494px;width:612px;height:18px;background:#f0f0f0"></div>
<div class="a" style="left:330px;top:494px;width:100px;height:19px;background:#fff;border:1px solid #000;border-top:none;border-right-width:2px;border-bottom-width:2px"></div>
<div class="a" style="left:326px;top:494px;width:4px;height:19px;background:#e3e3e3"></div>
<div class="t" style="left:342px;top:499px;font-size:12.3px;color:#000;">USDCNH-,H1</div>
<div class="t" style="left:441px;top:499px;font-size:12.2px;color:#7c7c7c;">XAGUSD-,H1</div>
<div class="a" style="left:526px;top:498px;width:1px;height:14px;background:#6a6a6a"></div>
<svg class="a" style="left:908px;top:500px;" width="4" height="7" viewBox="0 0 4 7"><path d="M4 0V7L0 3.5Z" fill="#a6a6a6"/></svg>
<svg class="a" style="left:927px;top:500px;" width="4" height="7" viewBox="0 0 4 7"><path d="M0 0V7L4 3.5Z" fill="#a6a6a6"/></svg>
<div class="a" style="left:324px;top:105px;width:2px;height:409px;background:#a0a0a0"></div>
<div class="a" style="left:938px;top:105px;width:2px;height:409px;background:#f0f0f0"></div>
<div class="a" style="left:940px;top:29px;width:1px;height:597px;background:#80858b"></div>
<div class="a" style="left:326px;top:512px;width:612px;height:2px;background:#f0f0f0"></div>
<div class="a" style="left:330px;top:494px;width:608px;height:1px;background:#a0a0a0"></div>
<div class="a" style="left:937px;top:494px;width:1px;height:19px;background:#a0a0a0"></div>
<div class="a" style="left:8px;top:514px;width:932px;height:84px;background:#f0f0f0"></div>
<div class="a" style="left:8px;top:513px;width:932px;height:1px;background:#fff"></div>
<svg class="a" style="left:12px;top:521px;" width="6" height="6" viewBox="0 0 6 6"><path d="M0.5 0.5 L5.5 5.5 M5.5 0.5 L0.5 5.5" stroke="#000" stroke-width="1.6"/></svg>
<div class="a" style="left:10px;top:532px;width:12px;height:66px;background:linear-gradient(#c9d9eb,#b5c9e1)"></div>
<div class="t" style="left:4px;top:578px;font-size:12px;color:#1e1e1e;transform:rotate(-90deg);transform-origin:center;width:24px;height:12px;text-align:center">终端</div>
<div class="a" style="left:23px;top:519px;width:914px;height:55px;background:#fff;border-top:1px solid #a0a0a0;border-left:1px solid #a0a0a0"></div>
<div class="a" style="left:24px;top:520px;width:896px;height:22px;background:linear-gradient(#ffffff,#f6f7f9 50%,#eceef1)"></div>
<div class="a" style="left:24px;top:542px;width:896px;height:1px;background:#d5d5d5"></div>
<div class="a" style="left:102px;top:520px;width:1px;height:22px;background:#dcdcdc"></div>
<div class="a" style="left:236px;top:520px;width:1px;height:22px;background:#dcdcdc"></div>
<div class="a" style="left:297px;top:520px;width:1px;height:22px;background:#dcdcdc"></div>
<div class="a" style="left:346px;top:520px;width:1px;height:22px;background:#dcdcdc"></div>
<div class="a" style="left:407px;top:520px;width:1px;height:22px;background:#dcdcdc"></div>
<div class="a" style="left:529px;top:520px;width:1px;height:22px;background:#dcdcdc"></div>
<div class="a" style="left:590px;top:520px;width:1px;height:22px;background:#dcdcdc"></div>
<div class="a" style="left:724px;top:520px;width:1px;height:22px;background:#dcdcdc"></div>
<div class="a" style="left:786px;top:520px;width:1px;height:22px;background:#dcdcdc"></div>
<div class="a" style="left:847px;top:520px;width:1px;height:22px;background:#dcdcdc"></div>
<div class="a" style="left:920px;top:520px;width:1px;height:22px;background:#dcdcdc"></div>
<div class="t" style="left:30px;top:524px;font-size:13px;color:#000;"><span style="font-size:12px">订单</span></div>
<svg class="a" style="left:66px;top:527px;" width="7" height="7" viewBox="0 0 7 7"><path d="M0.5 6.5 L3.5 0.5 L6.5 6.5" stroke="#b0b0b0" fill="none"/></svg>
<div class="t" style="left:-169px;width:400px;text-align:right;top:524px;font-size:13px;color:#000;"><span style="font-size:12px">时间</span></div>
<div class="t" style="left:-108px;width:400px;text-align:right;top:524px;font-size:13px;color:#000;"><span style="font-size:12px">类型</span></div>
<div class="t" style="left:-58px;width:400px;text-align:right;top:524px;font-size:13px;color:#000;"><span style="font-size:12px">手数</span></div>
<div class="t" style="left:353px;top:524px;font-size:13px;color:#000;"><span style="font-size:12px">交易品种</span></div>
<div class="t" style="left:63px;width:400px;text-align:right;top:524px;font-size:13px;color:#000;"><span style="font-size:12px">价格</span></div>
<div class="t" style="left:124px;width:400px;text-align:right;top:524px;font-size:13px;color:#000;"><span style="font-size:12px">止损</span></div>
<div class="t" style="left:185px;width:400px;text-align:right;top:524px;font-size:13px;color:#000;"><span style="font-size:12px">获利</span></div>
<div class="t" style="left:319px;width:400px;text-align:right;top:524px;font-size:13px;color:#000;"><span style="font-size:12px">时间</span></div>
<div class="t" style="left:380px;width:400px;text-align:right;top:524px;font-size:13px;color:#000;"><span style="font-size:12px">价格</span></div>
<div class="t" style="left:440px;width:400px;text-align:right;top:524px;font-size:13px;color:#000;"><span style="font-size:12px">库存费</span></div>
<div class="t" style="left:512px;width:400px;text-align:right;top:524px;font-size:13px;color:#000;"><span style="font-size:12px">获利</span></div>
<div class="a" style="left:24px;top:564px;width:896px;height:1px;background:#d4d4d4"></div>
<div class="a" style="left:102px;top:543px;width:1px;height:21px;background:#d4d4d4"></div>
<div class="a" style="left:236px;top:543px;width:1px;height:21px;background:#d4d4d4"></div>
<div class="a" style="left:297px;top:543px;width:1px;height:21px;background:#d4d4d4"></div>
<div class="a" style="left:847px;top:543px;width:1px;height:21px;background:#d4d4d4"></div>
<svg class="a" style="left:27px;top:546px;" width="12" height="15" viewBox="0 0 12 15"><rect x="0.5" y="0.5" width="11" height="14" rx="1" fill="#f3f3f3" stroke="#7c7c7c"/><path d="M6 3 L10 7.5 H7.5 V11.5 H4.5 V7.5 H2Z" fill="#2fb52f" stroke="#1a7a1a" stroke-width="0.6"/></svg>
<div class="t" style="left:46px;top:548px;font-size:12.4px;color:#000;">3410614</div>
<div class="t" style="left:-166px;width:400px;text-align:right;top:548px;font-size:12.4px;color:#000;">2018.09.14 08:06:59</div>
<div class="t" style="left:250px;top:548px;font-size:12.5px;color:#000;">balance</div>
<div class="t" style="left:443px;width:400px;text-align:right;top:548px;font-size:12.4px;color:#000;">DEPOSIT-1536912418950963742</div>
<div class="t" style="left:516px;width:400px;text-align:right;top:548px;font-size:12.3px;color:#000;">100.00</div>
<div class="a" style="left:24px;top:565px;width:896px;height:9px;background:#f2f2f2;overflow:hidden"></div>
<div class="a" style="left:24px;top:565px;width:896px;height:9px;overflow:hidden">
<div class="a" style="left:78px;top:0;width:1px;height:9px;background:#d4d4d4"></div>
<div class="a" style="left:212px;top:0;width:1px;height:9px;background:#d4d4d4"></div>
<div class="a" style="left:273px;top:0;width:1px;height:9px;background:#d4d4d4"></div>
<div class="a" style="left:322px;top:0;width:1px;height:9px;background:#d4d4d4"></div>
<div class="a" style="left:383px;top:0;width:1px;height:9px;background:#d4d4d4"></div>
<div class="a" style="left:505px;top:0;width:1px;height:9px;background:#d4d4d4"></div>
<div class="a" style="left:566px;top:0;width:1px;height:9px;background:#d4d4d4"></div>
<div class="a" style="left:700px;top:0;width:1px;height:9px;background:#d4d4d4"></div>
<div class="a" style="left:762px;top:0;width:1px;height:9px;background:#d4d4d4"></div>
<div class="a" style="left:823px;top:0;width:1px;height:9px;background:#d4d4d4"></div>
<svg class="a" style="left:3px;top:2px" width="12" height="8"><path d="M0.5 8 V0.5 H8 L11.5 4 V8" fill="#fff" stroke="#7c7c7c"/></svg>
<div class="t" style="left:22px;top:3px;font-size:12.4px">3410615</div>
<div class="t" style="left:-91px;width:300px;text-align:right;top:3px;font-size:12.4px">2018.09.14 08:08:04</div>
<div class="t" style="left:-32px;width:300px;text-align:right;top:3px;font-size:12.4px">sell</div>
<div class="t" style="left:18px;width:300px;text-align:right;top:3px;font-size:12.4px">0.10</div>
<div class="t" style="left:332px;top:3px;font-size:12.4px">nzdusd</div>
<div class="t" style="left:140px;width:300px;text-align:right;top:3px;font-size:12.4px">0.65915</div>
<div class="t" style="left:201px;width:300px;text-align:right;top:3px;font-size:12.4px">0.00000</div>
<div class="t" style="left:261px;width:300px;text-align:right;top:3px;font-size:12.4px">0.00000</div>
<div class="t" style="left:396px;width:300px;text-align:right;top:3px;font-size:12.4px">2018.09.18 05:55:41</div>
<div class="t" style="left:457px;width:300px;text-align:right;top:3px;font-size:12.4px">0.65907</div>
<div class="t" style="left:518px;width:300px;text-align:right;top:3px;font-size:12.4px">0.80</div>
<div class="t" style="left:590px;width:300px;text-align:right;top:3px;font-size:12.4px">8.20</div>
</div>
<div class="a" style="left:921px;top:519px;width:16px;height:55px;background:#eaeaea;border-left:1px solid #f4f4f4"></div>
<div class="a" style="left:922px;top:520px;width:14px;height:16px;background:linear-gradient(90deg,#f4f4f4,#e6e6e6);border:1px solid #e2e2e2"></div>
<svg class="a" style="left:925px;top:525px;" width="7" height="4" viewBox="0 0 7 4"><path d="M0 4 L3.5 0 L7 4Z" fill="#4a4a4a"/></svg>
<div class="a" style="left:922px;top:557px;width:14px;height:16px;background:linear-gradient(90deg,#f4f4f4,#e6e6e6);border:1px solid #e2e2e2"></div>
<svg class="a" style="left:925px;top:564px;" width="7" height="4" viewBox="0 0 7 4"><path d="M0 0 L3.5 4 L7 0Z" fill="#4a4a4a"/></svg>
<div class="a" style="left:922px;top:538px;width:14px;height:14px;background:linear-gradient(90deg,#f3f3f3,#e8e8e8 45%,#d4d4d4);border:1px solid #9b9b9b;border-radius:2px"></div>
<div class="a" style="left:23px;top:574px;width:914px;height:1px;background:#000"></div>
<div class="a" style="left:114px;top:574px;width:69px;height:22px;background:#fff;border:1px solid #000;border-top:none;border-right-width:2px;border-bottom-width:2px"></div>
<div class="t" style="left:123px;top:578px;font-size:13px;color:#000;"><span style="font-size:12px">账户历史</span></div>
<div class="t" style="left:35px;top:578px;font-size:13px;color:#7c7c7c;"><span style="font-size:12px">交易</span></div>
<div class="t" style="left:79px;top:578px;font-size:13px;color:#7c7c7c;"><span style="font-size:12px">展示</span></div>
<div class="t" style="left:192px;top:578px;font-size:13px;color:#7c7c7c;"><span style="font-size:12px">新闻</span></div>
<div class="t" style="left:236px;top:578px;font-size:13px;color:#7c7c7c;"><span style="font-size:12px">警报</span></div>
<div class="t" style="left:280px;top:578px;font-size:13px;color:#7c7c7c;"><span style="font-size:12px">邮箱</span></div>
<div class="t" style="left:332px;top:578px;font-size:13px;color:#7c7c7c;"><span style="font-size:12px">市场</span></div>
<div class="t" style="left:376px;top:578px;font-size:13px;color:#7c7c7c;"><span style="font-size:12px">信号</span></div>
<div class="t" style="left:420px;top:578px;font-size:13px;color:#7c7c7c;"><span style="font-size:12px">代码库</span></div>
<div class="t" style="left:477px;top:578px;font-size:13px;color:#7c7c7c;">EA</div>
<div class="t" style="left:511px;top:578px;font-size:13px;color:#7c7c7c;"><span style="font-size:12px">日志</span></div>
<div class="t" style="left:305px;top:585px;font-size:9.5px;color:#e02020;font-weight:bold">6</div>
<div class="a" style="left:70px;top:578px;width:1px;height:14px;background:#6a6a6a"></div>
<div class="a" style="left:226px;top:578px;width:1px;height:14px;background:#6a6a6a"></div>
<div class="a" style="left:270px;top:578px;width:1px;height:14px;background:#6a6a6a"></div>
<div class="a" style="left:322px;top:578px;width:1px;height:14px;background:#6a6a6a"></div>
<div class="a" style="left:367px;top:578px;width:1px;height:14px;background:#6a6a6a"></div>
<div class="a" style="left:410px;top:578px;width:1px;height:14px;background:#6a6a6a"></div>
<div class="a" style="left:466px;top:578px;width:1px;height:14px;background:#6a6a6a"></div>
<div class="a" style="left:501px;top:578px;width:1px;height:14px;background:#6a6a6a"></div>
<div class="a" style="left:546px;top:578px;width:1px;height:14px;background:#6a6a6a"></div>
<div class="a" style="left:7px;top:598px;width:934px;height:27px;background:#f0f0f0"></div>
<div class="a" style="left:8px;top:601px;width:932px;height:1px;background:#d8d8d8"></div>
<div class="a" style="left:8px;top:602px;width:932px;height:1px;background:#fff"></div>
<div class="t" style="left:10px;top:609px;font-size:12px;color:#000;"><span style="font-size:12px">寻求帮助</span>,<span style="font-size:12px">请按</span>F1<span style="font-size:12px">键</span></div>
<div class="t" style="left:258px;top:609px;font-size:13px;color:#000;">Default</div>
<div class="a" style="left:252px;top:605px;width:1px;height:18px;background:#a8a8a8"></div>
<div class="a" style="left:253px;top:605px;width:1px;height:18px;background:#fff"></div>
<div class="a" style="left:387px;top:605px;width:1px;height:18px;background:#a8a8a8"></div>
<div class="a" style="left:388px;top:605px;width:1px;height:18px;background:#fff"></div>
<div class="a" style="left:504px;top:605px;width:1px;height:18px;background:#a8a8a8"></div>
<div class="a" style="left:505px;top:605px;width:1px;height:18px;background:#fff"></div>
<div class="a" style="left:586px;top:605px;width:1px;height:18px;background:#a8a8a8"></div>
<div class="a" style="left:587px;top:605px;width:1px;height:18px;background:#fff"></div>
<div class="a" style="left:667px;top:605px;width:1px;height:18px;background:#a8a8a8"></div>
<div class="a" style="left:668px;top:605px;width:1px;height:18px;background:#fff"></div>
<div class="a" style="left:745px;top:605px;width:1px;height:18px;background:#a8a8a8"></div>
<div class="a" style="left:746px;top:605px;width:1px;height:18px;background:#fff"></div>
<div class="a" style="left:825px;top:605px;width:1px;height:18px;background:#a8a8a8"></div>
<div class="a" style="left:826px;top:605px;width:1px;height:18px;background:#fff"></div>
<div class="a" style="left:904px;top:605px;width:1px;height:18px;background:#a8a8a8"></div>
<div class="a" style="left:905px;top:605px;width:1px;height:18px;background:#fff"></div>
<svg class="a" style="left:908px;top:608px;" width="13" height="13" viewBox="0 0 13 13"><rect x="1" y="0" width="2" height="9" fill="#4e7d0a"/><rect x="1" y="10" width="2" height="3" fill="#0d3d62"/><rect x="4" y="0" width="2" height="7.5" fill="#4e7d0a"/><rect x="4" y="8.5" width="2" height="4.5" fill="#0d3d62"/><rect x="7" y="0" width="2" height="6.5" fill="#4e7d0a"/><rect x="7" y="7.5" width="2" height="5.5" fill="#0d3d62"/><rect x="10" y="0" width="2" height="5.5" fill="#4e7d0a"/><rect x="10" y="6.5" width="2" height="6.5" fill="#0d3d62"/></svg>
<svg class="a" style="left:924px;top:609px;" width="16" height="16" viewBox="0 0 16 16"><path d="M15.5 1 V15.5 H1 Z" fill="#e4e4e4"/><path d="M15 3 L3 15 M15 7 L7 15 M15 11 L11 15" stroke="#fff" stroke-width="1.6"/><path d="M15 4.5 L4.5 15 M15 8.5 L8.5 15 M15 12.5 L12.5 15" stroke="#a8a8a8" stroke-width="0.8"/></svg>
<div class="a" style="left:0px;top:625px;width:948px;height:8px;background:linear-gradient(#e8ebee,#d9dde2);border:1px solid #3c3c3c;border-top:1px solid #6e7276"></div>
<div class="a" style="left:108px;top:568px;width:78px;height:32px;border:3px solid #f63434"></div>
<svg class="a" style="left:0px;top:0px;pointer-events:none" width="948" height="633" viewBox="0 0 948 633"><defs><linearGradient id="rl" gradientUnits="userSpaceOnUse" x1="0" y1="85" x2="0" y2="140"><stop offset="0" stop-color="#fe3a3a" stop-opacity="0.35"/><stop offset="1" stop-color="#fe3a3a" stop-opacity="1"/></linearGradient></defs><path d="M194.42 85 L195.22 85 L162.74 556 L154.85 556 Z" fill="url(#rl)"/><path d="M151.8 553.6 L166.8 553.6 L158.1 568 Z" fill="#fe3a3a"/></svg>
<div class="a" style="left:941px;top:29px;width:7px;height:597px;background:#e6e6e6"></div>
<div class="a" style="left:942px;top:29px;width:4px;height:597px;background:linear-gradient(#eceef2 0px,#e2e3e6 111px,#cacaca 121px,#c2c2c2 143px,#3c3c3c 152px,#2f2f2f 321px,#d6d6d6 339px,#e8e8e8 389px,#7ba5d5 397px,#7aa4d4 411px,#b8bec6 418px,#d2d2d2 441px,#e6e6e6 471px,#c6c6c6 501px,#e6e6e6 531px,#bcbcbc 561px,#efefef 583px,#e2e2e2 596px)"></div>
<div class="a" style="left:941px;top:29px;width:1px;height:597px;background:linear-gradient(#d0d0d0,#bbbbbb)"></div>
<div class="a" style="left:946px;top:29px;width:1px;height:597px;background:#f2f2f2;opacity:.8"></div>
<div class="a" style="left:947px;top:0px;width:1px;height:633px;background:#3c3c3c"></div>
</body></html>
